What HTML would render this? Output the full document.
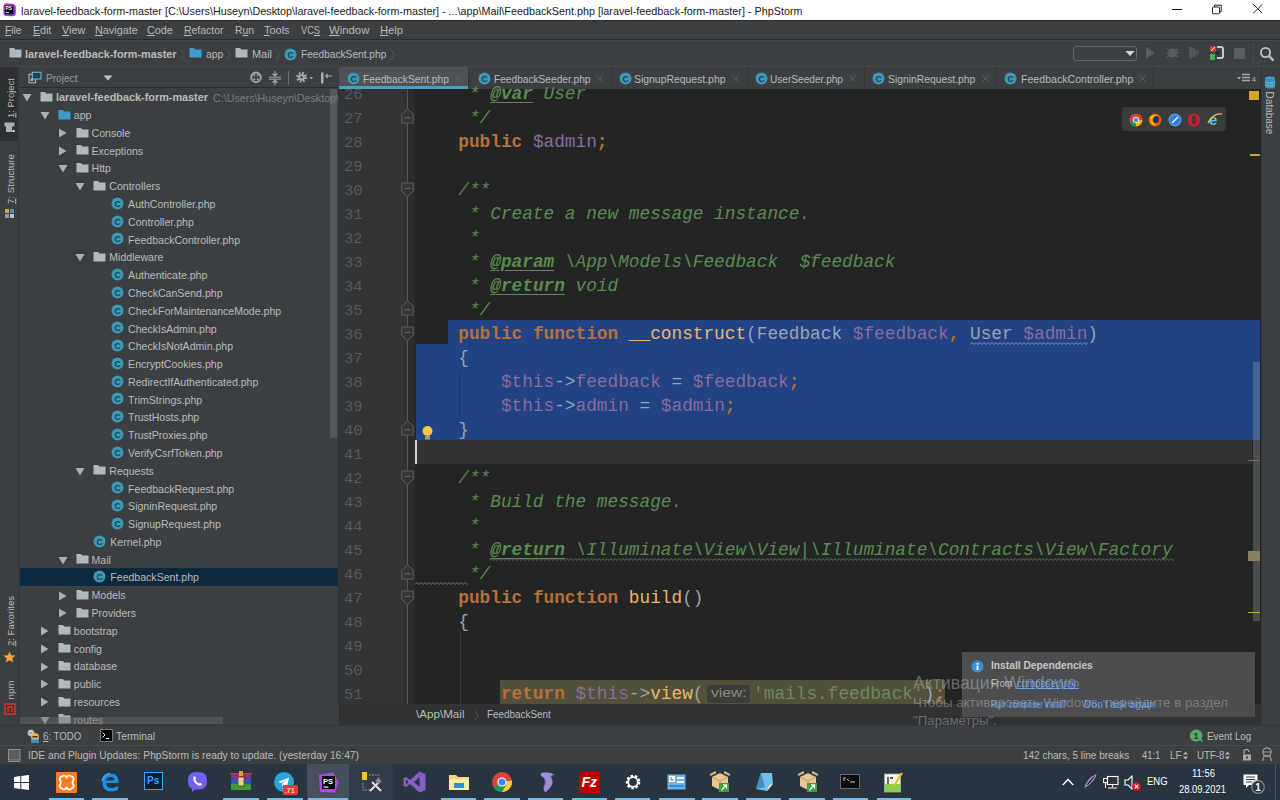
<!DOCTYPE html><html><head><meta charset="utf-8"><style>
html,body{margin:0;padding:0;width:1280px;height:800px;overflow:hidden;background:#3c3f41;}
body{position:relative;font-family:"Liberation Sans",sans-serif;}
div,svg{box-sizing:border-box;}
.u{text-decoration:underline;text-underline-offset:1px;}
</style></head><body>
<div style="position:absolute;left:0px;top:0px;width:1280px;height:20px;background:#ffffff;"></div>
<svg style="position:absolute;left:2px;top:2px;" width="15" height="15" viewBox="0 0 15 15"><defs><linearGradient id="psg" x1="0" y1="0" x2="1" y2="0.6"><stop offset="0" stop-color="#e03aa8"/><stop offset="0.5" stop-color="#a23ee8"/><stop offset="1" stop-color="#7a3cf0"/></linearGradient></defs><path d="M1.5 3.5 Q2 1 5 1.2 L10.5 1.8 Q13.5 2.2 13.8 5.5 L13.8 11 Q13.5 14.3 10 14.2 L4.5 14 Q1.3 13.8 1.3 10.5 Z" fill="url(#psg)"/><rect x="2.8" y="3.6" width="8.6" height="8.6" fill="#000"/><text x="3.4" y="8.2" font-family="Liberation Sans" font-size="5" font-weight="bold" fill="#fff">PS</text><rect x="3.6" y="10.2" width="3.4" height="0.9" fill="#fff"/></svg>
<div style="transform:scaleX(0.9308);position:absolute;left:20.6px;top:3.84px;height:13.92px;line-height:13.92px;font-family:'Liberation Sans',sans-serif;font-size:11.6px;color:#1a1a1a;font-weight:normal;white-space:pre;transform-origin:0 50%;">laravel-feedback-form-master [C:\Users\Huseyn\Desktop\laravel-feedback-form-master] - ...\app\Mail\FeedbackSent.php [laravel-feedback-form-master] - PhpStorm</div>
<div style="position:absolute;left:1172px;top:9px;width:10px;height:1px;background:#111;"></div>
<svg style="position:absolute;left:1211px;top:3.5px;" width="12" height="11" viewBox="0 0 12 11"><rect x="1.5" y="3" width="7" height="6.8" fill="none" stroke="#222" stroke-width="1" rx="0.8"/><path d="M3.5 3 V1.2 H10.2 V7.8 H8.5" fill="none" stroke="#222" stroke-width="1"/></svg>
<svg style="position:absolute;left:1253px;top:4px;" width="10" height="10" viewBox="0 0 10 10"><path d="M0.3 0.3 L9.2 9.2 M9.2 0.3 L0.3 9.2" stroke="#222" stroke-width="1"/></svg>
<div style="position:absolute;left:0px;top:20px;width:1280px;height:20px;background:#3c3f41;"></div>
<div style="position:absolute;left:0px;top:20px;width:1280px;height:1px;background:#2a2c2e;"></div>
<div style="position:absolute;left:0px;top:39px;width:1280px;height:1px;background:#2a2c2e;"></div>
<div style="transform:scaleX(0.9111);position:absolute;left:5.2px;top:23.72px;height:13.56px;line-height:13.56px;font-family:'Liberation Sans',sans-serif;font-size:11.3px;color:#bbbbbb;font-weight:normal;white-space:pre;transform-origin:0 50%;"><span class="u">F</span>ile</div>
<div style="transform:scaleX(0.9392);position:absolute;left:33.1px;top:23.72px;height:13.56px;line-height:13.56px;font-family:'Liberation Sans',sans-serif;font-size:11.3px;color:#bbbbbb;font-weight:normal;white-space:pre;transform-origin:0 50%;"><span class="u">E</span>dit</div>
<div style="transform:scaleX(0.9549);position:absolute;left:61.8px;top:23.72px;height:13.56px;line-height:13.56px;font-family:'Liberation Sans',sans-serif;font-size:11.3px;color:#bbbbbb;font-weight:normal;white-space:pre;transform-origin:0 50%;"><span class="u">V</span>iew</div>
<div style="transform:scaleX(0.9594);position:absolute;left:94.7px;top:23.72px;height:13.56px;line-height:13.56px;font-family:'Liberation Sans',sans-serif;font-size:11.3px;color:#bbbbbb;font-weight:normal;white-space:pre;transform-origin:0 50%;"><span class="u">N</span>avigate</div>
<div style="transform:scaleX(0.9471);position:absolute;left:147.2px;top:23.72px;height:13.56px;line-height:13.56px;font-family:'Liberation Sans',sans-serif;font-size:11.3px;color:#bbbbbb;font-weight:normal;white-space:pre;transform-origin:0 50%;"><span class="u">C</span>ode</div>
<div style="transform:scaleX(0.9223);position:absolute;left:184.1px;top:23.72px;height:13.56px;line-height:13.56px;font-family:'Liberation Sans',sans-serif;font-size:11.3px;color:#bbbbbb;font-weight:normal;white-space:pre;transform-origin:0 50%;"><span class="u">R</span>efactor</div>
<div style="transform:scaleX(0.9150);position:absolute;left:234.8px;top:23.72px;height:13.56px;line-height:13.56px;font-family:'Liberation Sans',sans-serif;font-size:11.3px;color:#bbbbbb;font-weight:normal;white-space:pre;transform-origin:0 50%;">R<span class="u">u</span>n</div>
<div style="transform:scaleX(0.9700);position:absolute;left:263.5px;top:23.72px;height:13.56px;line-height:13.56px;font-family:'Liberation Sans',sans-serif;font-size:11.3px;color:#bbbbbb;font-weight:normal;white-space:pre;transform-origin:0 50%;"><span class="u">T</span>ools</div>
<div style="transform:scaleX(0.8172);position:absolute;left:300.5px;top:23.72px;height:13.56px;line-height:13.56px;font-family:'Liberation Sans',sans-serif;font-size:11.3px;color:#bbbbbb;font-weight:normal;white-space:pre;transform-origin:0 50%;">VC<span class="u">S</span></div>
<div style="transform:scaleX(1.0049);position:absolute;left:329.1px;top:23.72px;height:13.56px;line-height:13.56px;font-family:'Liberation Sans',sans-serif;font-size:11.3px;color:#bbbbbb;font-weight:normal;white-space:pre;transform-origin:0 50%;"><span class="u">W</span>indow</div>
<div style="transform:scaleX(0.9935);position:absolute;left:380.0px;top:23.72px;height:13.56px;line-height:13.56px;font-family:'Liberation Sans',sans-serif;font-size:11.3px;color:#bbbbbb;font-weight:normal;white-space:pre;transform-origin:0 50%;"><span class="u">H</span>elp</div>
<div style="position:absolute;left:0px;top:40px;width:1280px;height:26px;background:#3c3f41;"></div>
<div style="position:absolute;left:0px;top:40px;width:1280px;height:1px;background:#45484a;"></div>
<div style="position:absolute;left:0px;top:66px;width:1280px;height:1px;background:#45484a;"></div>
<svg style="position:absolute;left:8.6px;top:47px;" width="14" height="11" viewBox="0 0 14 11"><path d="M0.5 1 h4.5 l1.2 1.5 h6.3 v8 h-12 z" fill="#aeb9c0"/></svg>
<div style="transform:scaleX(0.9574);position:absolute;left:25px;top:47.82px;height:13.56px;line-height:13.56px;font-family:'Liberation Sans',sans-serif;font-size:11.3px;color:#bbbbbb;font-weight:bold;white-space:pre;transform-origin:0 50%;">laravel-feedback-form-master</div>
<svg style="position:absolute;left:180px;top:49px;" width="7" height="11" viewBox="0 0 7 11"><path d="M1 0.5 L4.5 5.5 L1 10.5" fill="none" stroke="#55585a" stroke-width="1"/></svg>
<svg style="position:absolute;left:189px;top:47px;" width="14" height="11" viewBox="0 0 14 11"><path d="M0.5 1 h4.5 l1.2 1.5 h6.3 v8 h-12 z" fill="#3c9ccc"/></svg>
<div style="transform:scaleX(0.9120);position:absolute;left:205.6px;top:47.82px;height:13.56px;line-height:13.56px;font-family:'Liberation Sans',sans-serif;font-size:11.3px;color:#bbbbbb;font-weight:normal;white-space:pre;transform-origin:0 50%;">app</div>
<svg style="position:absolute;left:225.5px;top:49px;" width="7" height="11" viewBox="0 0 7 11"><path d="M1 0.5 L4.5 5.5 L1 10.5" fill="none" stroke="#55585a" stroke-width="1"/></svg>
<svg style="position:absolute;left:235px;top:47px;" width="14" height="11" viewBox="0 0 14 11"><path d="M0.5 1 h4.5 l1.2 1.5 h6.3 v8 h-12 z" fill="#aeb9c0"/></svg>
<div style="transform:scaleX(0.9653);position:absolute;left:251.5px;top:47.82px;height:13.56px;line-height:13.56px;font-family:'Liberation Sans',sans-serif;font-size:11.3px;color:#bbbbbb;font-weight:normal;white-space:pre;transform-origin:0 50%;">Mail</div>
<svg style="position:absolute;left:274.8px;top:49px;" width="7" height="11" viewBox="0 0 7 11"><path d="M1 0.5 L4.5 5.5 L1 10.5" fill="none" stroke="#55585a" stroke-width="1"/></svg>
<svg style="position:absolute;left:284.3px;top:47.7px;" width="13" height="13" viewBox="0 0 13 13"><circle cx="6.5" cy="6.5" r="6.0" fill="#3e98b6"/><text x="6.5" y="10.0" text-anchor="middle" font-family="Liberation Sans" font-size="8.6" font-weight="bold" fill="#1d3f52">C</text></svg>
<div style="transform:scaleX(0.8994);position:absolute;left:300.7px;top:47.82px;height:13.56px;line-height:13.56px;font-family:'Liberation Sans',sans-serif;font-size:11.3px;color:#bbbbbb;font-weight:normal;white-space:pre;transform-origin:0 50%;">FeedbackSent.php</div>
<svg style="position:absolute;left:389.6px;top:49px;" width="7" height="11" viewBox="0 0 7 11"><path d="M1 0.5 L4.5 5.5 L1 10.5" fill="none" stroke="#55585a" stroke-width="1"/></svg>
<div style="position:absolute;left:1073.4px;top:45.7px;width:64px;height:15.5px;background:transparent;border:1px solid #646669;border-radius:3px;"></div>
<svg style="position:absolute;left:1125px;top:50px;" width="10" height="7" viewBox="0 0 10 7"><path d="M0.5 1 L9.5 1 L5 6 z" fill="#d8d8d8"/></svg>
<svg style="position:absolute;left:1145px;top:46px;" width="11" height="14" viewBox="0 0 11 14"><path d="M1 1 L10 7 L1 13 z" fill="#5b5e60"/></svg>
<svg style="position:absolute;left:1165px;top:45px;" width="15" height="15" viewBox="0 0 15 15"><circle cx="7.5" cy="8" r="4.5" fill="#5b5e60"/><path d="M2 4 L5 6 M13 4 L10 6 M1 8 H4 M11 8 H14 M2 12 L5 10 M13 12 L10 10" stroke="#5b5e60" stroke-width="1.2"/></svg>
<svg style="position:absolute;left:1187px;top:45px;" width="15" height="15" viewBox="0 0 15 15"><path d="M2 1 L13 7.5 L2 14 z" fill="#505355"/><path d="M4 2 v11 M7 3 v9 M10 5 v5" stroke="#6a6d70" stroke-width="1" stroke-dasharray="1,1"/></svg>
<svg style="position:absolute;left:1208px;top:45px;" width="16" height="16" viewBox="0 0 16 16"><circle cx="5" cy="4" r="3.2" fill="#d83b3b"/><path d="M3 6 L7 2" stroke="#fff" stroke-width="0.8"/><rect x="2" y="9" width="5" height="6" fill="#3bb54a"/><path d="M9 2 h4 q2 0 2 2 v7 q0 2 -2 2 h-4" fill="none" stroke="#c8c8c8" stroke-width="2"/><path d="M7 8 L11 6 L11 10 z" fill="#222"/></svg>
<div style="position:absolute;left:1234px;top:48.3px;width:10.7px;height:10.3px;background:#5b5e60;"></div>
<svg style="position:absolute;left:1252px;top:44px;" width="3" height="21" viewBox="0 0 3 21"><path d="M1.5 0 V21" stroke="#5a5d5f" stroke-width="1" stroke-dasharray="1,2"/></svg>
<svg style="position:absolute;left:1259px;top:46px;" width="16" height="16" viewBox="0 0 16 16"><circle cx="6.5" cy="6.5" r="4.6" fill="none" stroke="#c0c2c4" stroke-width="1.8"/><path d="M10 10 L14.5 14.5" stroke="#c0c2c4" stroke-width="2.4"/></svg>
<div style="position:absolute;left:0px;top:67px;width:19px;height:660px;background:#3c3f41;"></div>
<div style="position:absolute;left:18px;top:67px;width:1px;height:660px;background:#323436;"></div>
<div style="position:absolute;left:0px;top:67px;width:18px;height:74px;background:#2d2f30;"></div>
<div style="position:absolute;left:11px;top:98.2px;width:0;height:0;"><div style="position:absolute;left:0;top:0;transform:translate(-50%,-50%) rotate(-90deg);white-space:pre;font-family:'Liberation Sans',sans-serif;font-size:9.45px;line-height:11.339999999999998px;color:#bbbbbb;"><span class="u">1</span>: Project</div></div>
<svg style="position:absolute;left:4px;top:122px;" width="12" height="11" viewBox="0 0 12 11"><rect x="0.5" y="0.5" width="10" height="4" fill="#adb0b3"/><rect x="2" y="4" width="6" height="6" fill="#adb0b3"/><rect x="8.5" y="8" width="2" height="2" fill="#eee"/></svg>
<div style="position:absolute;left:11px;top:179px;width:0;height:0;"><div style="position:absolute;left:0;top:0;transform:translate(-50%,-50%) rotate(-90deg);white-space:pre;font-family:'Liberation Sans',sans-serif;font-size:9.65px;line-height:11.58px;color:#bbbbbb;"><span class="u">7</span>: Structure</div></div>
<svg style="position:absolute;left:4px;top:208px;" width="12" height="12" viewBox="0 0 12 12"><rect x="1" y="1" width="4" height="4" fill="#e0a030"/><rect x="6" y="1" width="4" height="4" fill="#4a8ec8"/><rect x="1" y="6" width="4" height="4" fill="#7aa0c0"/><rect x="6" y="6" width="4" height="4" fill="#c0c0c0"/></svg>
<div style="position:absolute;left:11px;top:621px;width:0;height:0;"><div style="position:absolute;left:0;top:0;transform:translate(-50%,-50%) rotate(-90deg);white-space:pre;font-family:'Liberation Sans',sans-serif;font-size:9.6px;line-height:11.52px;color:#bbbbbb;"><span class="u">2</span>: Favorites</div></div>
<svg style="position:absolute;left:3px;top:651px;" width="13" height="12" viewBox="0 0 13 12"><path d="M6.5 0.5 L8.2 4.3 L12.5 4.6 L9.2 7.4 L10.3 11.5 L6.5 9.3 L2.7 11.5 L3.8 7.4 L0.5 4.6 L4.8 4.3 z" fill="#f0a732"/></svg>
<div style="position:absolute;left:11px;top:690px;width:0;height:0;"><div style="position:absolute;left:0;top:0;transform:translate(-50%,-50%) rotate(-90deg);white-space:pre;font-family:'Liberation Sans',sans-serif;font-size:9.8px;line-height:11.76px;color:#bbbbbb;">npm</div></div>
<svg style="position:absolute;left:4px;top:703px;" width="12" height="12" viewBox="0 0 12 12"><rect x="1" y="1" width="10" height="10" fill="#5a2a28" stroke="#cb3837" stroke-width="1.6"/><path d="M4 9 V4 H8 V9" fill="none" stroke="#cb3837" stroke-width="1.4"/></svg>
<div style="position:absolute;left:19.5px;top:67px;width:319px;height:658px;background:#3c3f41;"></div>
<div style="position:absolute;left:19.5px;top:87px;width:319px;height:1px;background:#2b2b2b;"></div>
<svg style="position:absolute;left:27px;top:71px;" width="16" height="14" viewBox="0 0 16 14"><rect x="2" y="3.3" width="6.5" height="8.5" fill="#3c3f41" stroke="#b0b3b5" stroke-width="1.1"/><rect x="5.3" y="1.3" width="8.7" height="6.7" fill="#1f4050" stroke="#6ab4d4" stroke-width="1.1"/><rect x="3.5" y="7.5" width="2.5" height="2.5" fill="#b0b3b5"/></svg>
<div style="transform:scaleX(1.0120);position:absolute;left:45.5px;top:72.60px;height:12.00px;line-height:12.00px;font-family:'Liberation Sans',sans-serif;font-size:10px;color:#999b9d;font-weight:normal;white-space:pre;transform-origin:0 50%;">Project</div>
<svg style="position:absolute;left:103px;top:75px;" width="10" height="6" viewBox="0 0 10 6"><path d="M0.5 0.5 L9.5 0.5 L5 5.5 z" fill="#c8c8c8"/></svg>
<svg style="position:absolute;left:249.5px;top:71px;" width="13" height="13" viewBox="0 0 13 13"><circle cx="6" cy="6.3" r="4.8" fill="none" stroke="#a8aaad" stroke-width="1.8"/><path d="M3.5 3.5 L5 5 M8.5 3.5 L7 5 M3.5 9 L5 7.5 M8.5 9 L7 7.5" stroke="#a8aaad" stroke-width="1.6"/></svg>
<svg style="position:absolute;left:269px;top:71px;" width="12" height="14" viewBox="0 0 12 14"><path d="M0 6.2 H12 M0 8.2 H12" stroke="#a8aaad" stroke-width="1"/><path d="M6 0 V4.5 M3.5 2.5 L6 5 L8.5 2.5 M6 14 V9.8 M3.5 11.8 L6 9.4 L8.5 11.8" fill="none" stroke="#a8aaad" stroke-width="1.2"/></svg>
<div style="position:absolute;left:288.3px;top:71px;width:1.2px;height:13.5px;background:#6b6e70;"></div>
<svg style="position:absolute;left:295.5px;top:71px;" width="18" height="13" viewBox="0 0 18 13"><circle cx="5.6" cy="6.3" r="4.2" fill="none" stroke="#a8aaad" stroke-width="2.6" stroke-dasharray="1.7,1.6"/><circle cx="5.6" cy="6.3" r="3.4" fill="#a8aaad"/><circle cx="5.6" cy="6.3" r="1.2" fill="#3c3f41"/><path d="M13.5 6 L17 6 L15.25 8.2 z" fill="#a8aaad"/></svg>
<svg style="position:absolute;left:320px;top:72px;" width="13" height="12" viewBox="0 0 13 12"><rect x="1" y="0.5" width="2.5" height="11" fill="#a8aaad"/><path d="M5.5 4 L8 2 M5.5 4 L8 6 M5.5 4 H12" stroke="#a8aaad" stroke-width="1.1" fill="none"/></svg>
<div style="position:absolute;left:329.5px;top:89px;width:7.5px;height:349px;background:#57595b;"></div>
<svg style="position:absolute;left:22.0px;top:93.3px;" width="10" height="9" viewBox="0 0 10 9"><path d="M0.5 1 L9.5 1 L5 8.5 z" fill="#adb0b2"/></svg>
<svg style="position:absolute;left:40.0px;top:91.0px;" width="14" height="11" viewBox="0 0 14 11"><path d="M0.5 1 h4.5 l1.2 1.5 h6.3 v8 h-12 z" fill="#aeb9c0"/></svg>
<div style="transform:scaleX(0.9606);position:absolute;left:56.0px;top:90.72px;height:13.56px;line-height:13.56px;font-family:'Liberation Sans',sans-serif;font-size:11.3px;color:#bbbbbb;font-weight:bold;white-space:pre;transform-origin:0 50%;">laravel-feedback-form-master</div>
<div style="transform:scaleX(0.9722);position:absolute;left:213px;top:91.70px;height:13.20px;line-height:13.20px;font-family:'Liberation Sans',sans-serif;font-size:11px;color:#7a7d80;font-weight:normal;white-space:pre;transform-origin:0 50%;">C:\Users\Huseyn\Desktop\</div>
<svg style="position:absolute;left:39.78px;top:111.08px;" width="10" height="9" viewBox="0 0 10 9"><path d="M0.5 1 L9.5 1 L5 8.5 z" fill="#adb0b2"/></svg>
<svg style="position:absolute;left:57.78px;top:108.78px;" width="14" height="11" viewBox="0 0 14 11"><path d="M0.5 1 h4.5 l1.2 1.5 h6.3 v8 h-12 z" fill="#3c9ccc"/></svg>
<div style="position:absolute;left:73.78px;top:109.15px;height:12.66px;line-height:12.66px;font-family:'Liberation Sans',sans-serif;font-size:10.55px;color:#bbbbbb;font-weight:normal;white-space:pre;">app</div>
<svg style="position:absolute;left:58.06px;top:128.26px;" width="9" height="10" viewBox="0 0 9 10"><path d="M1 0.5 L8.5 5 L1 9.5 z" fill="#adb0b2"/></svg>
<svg style="position:absolute;left:75.56px;top:126.56px;" width="14" height="11" viewBox="0 0 14 11"><path d="M0.5 1 h4.5 l1.2 1.5 h6.3 v8 h-12 z" fill="#aeb9c0"/></svg>
<div style="position:absolute;left:91.56px;top:126.93px;height:12.66px;line-height:12.66px;font-family:'Liberation Sans',sans-serif;font-size:10.55px;color:#bbbbbb;font-weight:normal;white-space:pre;">Console</div>
<svg style="position:absolute;left:58.06px;top:146.04px;" width="9" height="10" viewBox="0 0 9 10"><path d="M1 0.5 L8.5 5 L1 9.5 z" fill="#adb0b2"/></svg>
<svg style="position:absolute;left:75.56px;top:144.34px;" width="14" height="11" viewBox="0 0 14 11"><path d="M0.5 1 h4.5 l1.2 1.5 h6.3 v8 h-12 z" fill="#aeb9c0"/></svg>
<div style="position:absolute;left:91.56px;top:144.71px;height:12.66px;line-height:12.66px;font-family:'Liberation Sans',sans-serif;font-size:10.55px;color:#bbbbbb;font-weight:normal;white-space:pre;">Exceptions</div>
<svg style="position:absolute;left:57.56px;top:164.42000000000002px;" width="10" height="9" viewBox="0 0 10 9"><path d="M0.5 1 L9.5 1 L5 8.5 z" fill="#adb0b2"/></svg>
<svg style="position:absolute;left:75.56px;top:162.12px;" width="14" height="11" viewBox="0 0 14 11"><path d="M0.5 1 h4.5 l1.2 1.5 h6.3 v8 h-12 z" fill="#aeb9c0"/></svg>
<div style="position:absolute;left:91.56px;top:162.49px;height:12.66px;line-height:12.66px;font-family:'Liberation Sans',sans-serif;font-size:10.55px;color:#bbbbbb;font-weight:normal;white-space:pre;">Http</div>
<svg style="position:absolute;left:75.34px;top:182.20000000000002px;" width="10" height="9" viewBox="0 0 10 9"><path d="M0.5 1 L9.5 1 L5 8.5 z" fill="#adb0b2"/></svg>
<svg style="position:absolute;left:93.34px;top:179.9px;" width="14" height="11" viewBox="0 0 14 11"><path d="M0.5 1 h4.5 l1.2 1.5 h6.3 v8 h-12 z" fill="#aeb9c0"/></svg>
<div style="position:absolute;left:109.34px;top:180.27px;height:12.66px;line-height:12.66px;font-family:'Liberation Sans',sans-serif;font-size:10.55px;color:#bbbbbb;font-weight:normal;white-space:pre;">Controllers</div>
<svg style="position:absolute;left:111.12px;top:196.88px;" width="13" height="13" viewBox="0 0 13 13"><circle cx="6.5" cy="6.5" r="6.0" fill="#3e98b6"/><text x="6.5" y="10.0" text-anchor="middle" font-family="Liberation Sans" font-size="8.6" font-weight="bold" fill="#1d3f52">C</text></svg>
<div style="position:absolute;left:128.12px;top:198.05px;height:12.66px;line-height:12.66px;font-family:'Liberation Sans',sans-serif;font-size:10.55px;color:#bbbbbb;font-weight:normal;white-space:pre;">AuthController.php</div>
<svg style="position:absolute;left:111.12px;top:214.66px;" width="13" height="13" viewBox="0 0 13 13"><circle cx="6.5" cy="6.5" r="6.0" fill="#3e98b6"/><text x="6.5" y="10.0" text-anchor="middle" font-family="Liberation Sans" font-size="8.6" font-weight="bold" fill="#1d3f52">C</text></svg>
<div style="position:absolute;left:128.12px;top:215.83px;height:12.66px;line-height:12.66px;font-family:'Liberation Sans',sans-serif;font-size:10.55px;color:#bbbbbb;font-weight:normal;white-space:pre;">Controller.php</div>
<svg style="position:absolute;left:111.12px;top:232.44px;" width="13" height="13" viewBox="0 0 13 13"><circle cx="6.5" cy="6.5" r="6.0" fill="#3e98b6"/><text x="6.5" y="10.0" text-anchor="middle" font-family="Liberation Sans" font-size="8.6" font-weight="bold" fill="#1d3f52">C</text></svg>
<div style="position:absolute;left:128.12px;top:233.61px;height:12.66px;line-height:12.66px;font-family:'Liberation Sans',sans-serif;font-size:10.55px;color:#bbbbbb;font-weight:normal;white-space:pre;">FeedbackController.php</div>
<svg style="position:absolute;left:75.34px;top:253.32px;" width="10" height="9" viewBox="0 0 10 9"><path d="M0.5 1 L9.5 1 L5 8.5 z" fill="#adb0b2"/></svg>
<svg style="position:absolute;left:93.34px;top:251.01999999999998px;" width="14" height="11" viewBox="0 0 14 11"><path d="M0.5 1 h4.5 l1.2 1.5 h6.3 v8 h-12 z" fill="#aeb9c0"/></svg>
<div style="position:absolute;left:109.34px;top:251.39px;height:12.66px;line-height:12.66px;font-family:'Liberation Sans',sans-serif;font-size:10.55px;color:#bbbbbb;font-weight:normal;white-space:pre;">Middleware</div>
<svg style="position:absolute;left:111.12px;top:268.0px;" width="13" height="13" viewBox="0 0 13 13"><circle cx="6.5" cy="6.5" r="6.0" fill="#3e98b6"/><text x="6.5" y="10.0" text-anchor="middle" font-family="Liberation Sans" font-size="8.6" font-weight="bold" fill="#1d3f52">C</text></svg>
<div style="position:absolute;left:128.12px;top:269.17px;height:12.66px;line-height:12.66px;font-family:'Liberation Sans',sans-serif;font-size:10.55px;color:#bbbbbb;font-weight:normal;white-space:pre;">Authenticate.php</div>
<svg style="position:absolute;left:111.12px;top:285.78000000000003px;" width="13" height="13" viewBox="0 0 13 13"><circle cx="6.5" cy="6.5" r="6.0" fill="#3e98b6"/><text x="6.5" y="10.0" text-anchor="middle" font-family="Liberation Sans" font-size="8.6" font-weight="bold" fill="#1d3f52">C</text></svg>
<div style="position:absolute;left:128.12px;top:286.95px;height:12.66px;line-height:12.66px;font-family:'Liberation Sans',sans-serif;font-size:10.55px;color:#bbbbbb;font-weight:normal;white-space:pre;">CheckCanSend.php</div>
<svg style="position:absolute;left:111.12px;top:303.56px;" width="13" height="13" viewBox="0 0 13 13"><circle cx="6.5" cy="6.5" r="6.0" fill="#3e98b6"/><text x="6.5" y="10.0" text-anchor="middle" font-family="Liberation Sans" font-size="8.6" font-weight="bold" fill="#1d3f52">C</text></svg>
<div style="position:absolute;left:128.12px;top:304.73px;height:12.66px;line-height:12.66px;font-family:'Liberation Sans',sans-serif;font-size:10.55px;color:#bbbbbb;font-weight:normal;white-space:pre;">CheckForMaintenanceMode.php</div>
<svg style="position:absolute;left:111.12px;top:321.34px;" width="13" height="13" viewBox="0 0 13 13"><circle cx="6.5" cy="6.5" r="6.0" fill="#3e98b6"/><text x="6.5" y="10.0" text-anchor="middle" font-family="Liberation Sans" font-size="8.6" font-weight="bold" fill="#1d3f52">C</text></svg>
<div style="position:absolute;left:128.12px;top:322.51px;height:12.66px;line-height:12.66px;font-family:'Liberation Sans',sans-serif;font-size:10.55px;color:#bbbbbb;font-weight:normal;white-space:pre;">CheckIsAdmin.php</div>
<svg style="position:absolute;left:111.12px;top:339.12px;" width="13" height="13" viewBox="0 0 13 13"><circle cx="6.5" cy="6.5" r="6.0" fill="#3e98b6"/><text x="6.5" y="10.0" text-anchor="middle" font-family="Liberation Sans" font-size="8.6" font-weight="bold" fill="#1d3f52">C</text></svg>
<div style="position:absolute;left:128.12px;top:340.29px;height:12.66px;line-height:12.66px;font-family:'Liberation Sans',sans-serif;font-size:10.55px;color:#bbbbbb;font-weight:normal;white-space:pre;">CheckIsNotAdmin.php</div>
<svg style="position:absolute;left:111.12px;top:356.90000000000003px;" width="13" height="13" viewBox="0 0 13 13"><circle cx="6.5" cy="6.5" r="6.0" fill="#3e98b6"/><text x="6.5" y="10.0" text-anchor="middle" font-family="Liberation Sans" font-size="8.6" font-weight="bold" fill="#1d3f52">C</text></svg>
<div style="position:absolute;left:128.12px;top:358.07px;height:12.66px;line-height:12.66px;font-family:'Liberation Sans',sans-serif;font-size:10.55px;color:#bbbbbb;font-weight:normal;white-space:pre;">EncryptCookies.php</div>
<svg style="position:absolute;left:111.12px;top:374.68px;" width="13" height="13" viewBox="0 0 13 13"><circle cx="6.5" cy="6.5" r="6.0" fill="#3e98b6"/><text x="6.5" y="10.0" text-anchor="middle" font-family="Liberation Sans" font-size="8.6" font-weight="bold" fill="#1d3f52">C</text></svg>
<div style="position:absolute;left:128.12px;top:375.85px;height:12.66px;line-height:12.66px;font-family:'Liberation Sans',sans-serif;font-size:10.55px;color:#bbbbbb;font-weight:normal;white-space:pre;">RedirectIfAuthenticated.php</div>
<svg style="position:absolute;left:111.12px;top:392.46px;" width="13" height="13" viewBox="0 0 13 13"><circle cx="6.5" cy="6.5" r="6.0" fill="#3e98b6"/><text x="6.5" y="10.0" text-anchor="middle" font-family="Liberation Sans" font-size="8.6" font-weight="bold" fill="#1d3f52">C</text></svg>
<div style="position:absolute;left:128.12px;top:393.63px;height:12.66px;line-height:12.66px;font-family:'Liberation Sans',sans-serif;font-size:10.55px;color:#bbbbbb;font-weight:normal;white-space:pre;">TrimStrings.php</div>
<svg style="position:absolute;left:111.12px;top:410.24px;" width="13" height="13" viewBox="0 0 13 13"><circle cx="6.5" cy="6.5" r="6.0" fill="#3e98b6"/><text x="6.5" y="10.0" text-anchor="middle" font-family="Liberation Sans" font-size="8.6" font-weight="bold" fill="#1d3f52">C</text></svg>
<div style="position:absolute;left:128.12px;top:411.41px;height:12.66px;line-height:12.66px;font-family:'Liberation Sans',sans-serif;font-size:10.55px;color:#bbbbbb;font-weight:normal;white-space:pre;">TrustHosts.php</div>
<svg style="position:absolute;left:111.12px;top:428.02000000000004px;" width="13" height="13" viewBox="0 0 13 13"><circle cx="6.5" cy="6.5" r="6.0" fill="#3e98b6"/><text x="6.5" y="10.0" text-anchor="middle" font-family="Liberation Sans" font-size="8.6" font-weight="bold" fill="#1d3f52">C</text></svg>
<div style="position:absolute;left:128.12px;top:429.19px;height:12.66px;line-height:12.66px;font-family:'Liberation Sans',sans-serif;font-size:10.55px;color:#bbbbbb;font-weight:normal;white-space:pre;">TrustProxies.php</div>
<svg style="position:absolute;left:111.12px;top:445.8px;" width="13" height="13" viewBox="0 0 13 13"><circle cx="6.5" cy="6.5" r="6.0" fill="#3e98b6"/><text x="6.5" y="10.0" text-anchor="middle" font-family="Liberation Sans" font-size="8.6" font-weight="bold" fill="#1d3f52">C</text></svg>
<div style="position:absolute;left:128.12px;top:446.97px;height:12.66px;line-height:12.66px;font-family:'Liberation Sans',sans-serif;font-size:10.55px;color:#bbbbbb;font-weight:normal;white-space:pre;">VerifyCsrfToken.php</div>
<svg style="position:absolute;left:75.34px;top:466.68px;" width="10" height="9" viewBox="0 0 10 9"><path d="M0.5 1 L9.5 1 L5 8.5 z" fill="#adb0b2"/></svg>
<svg style="position:absolute;left:93.34px;top:464.38px;" width="14" height="11" viewBox="0 0 14 11"><path d="M0.5 1 h4.5 l1.2 1.5 h6.3 v8 h-12 z" fill="#aeb9c0"/></svg>
<div style="position:absolute;left:109.34px;top:464.75px;height:12.66px;line-height:12.66px;font-family:'Liberation Sans',sans-serif;font-size:10.55px;color:#bbbbbb;font-weight:normal;white-space:pre;">Requests</div>
<svg style="position:absolute;left:111.12px;top:481.36px;" width="13" height="13" viewBox="0 0 13 13"><circle cx="6.5" cy="6.5" r="6.0" fill="#3e98b6"/><text x="6.5" y="10.0" text-anchor="middle" font-family="Liberation Sans" font-size="8.6" font-weight="bold" fill="#1d3f52">C</text></svg>
<div style="position:absolute;left:128.12px;top:482.53px;height:12.66px;line-height:12.66px;font-family:'Liberation Sans',sans-serif;font-size:10.55px;color:#bbbbbb;font-weight:normal;white-space:pre;">FeedbackRequest.php</div>
<svg style="position:absolute;left:111.12px;top:499.14000000000004px;" width="13" height="13" viewBox="0 0 13 13"><circle cx="6.5" cy="6.5" r="6.0" fill="#3e98b6"/><text x="6.5" y="10.0" text-anchor="middle" font-family="Liberation Sans" font-size="8.6" font-weight="bold" fill="#1d3f52">C</text></svg>
<div style="position:absolute;left:128.12px;top:500.31px;height:12.66px;line-height:12.66px;font-family:'Liberation Sans',sans-serif;font-size:10.55px;color:#bbbbbb;font-weight:normal;white-space:pre;">SigninRequest.php</div>
<svg style="position:absolute;left:111.12px;top:516.9200000000001px;" width="13" height="13" viewBox="0 0 13 13"><circle cx="6.5" cy="6.5" r="6.0" fill="#3e98b6"/><text x="6.5" y="10.0" text-anchor="middle" font-family="Liberation Sans" font-size="8.6" font-weight="bold" fill="#1d3f52">C</text></svg>
<div style="position:absolute;left:128.12px;top:518.09px;height:12.66px;line-height:12.66px;font-family:'Liberation Sans',sans-serif;font-size:10.55px;color:#bbbbbb;font-weight:normal;white-space:pre;">SignupRequest.php</div>
<svg style="position:absolute;left:93.34px;top:534.7px;" width="13" height="13" viewBox="0 0 13 13"><circle cx="6.5" cy="6.5" r="6.0" fill="#3e98b6"/><text x="6.5" y="10.0" text-anchor="middle" font-family="Liberation Sans" font-size="8.6" font-weight="bold" fill="#1d3f52">C</text></svg>
<div style="position:absolute;left:110.34px;top:535.87px;height:12.66px;line-height:12.66px;font-family:'Liberation Sans',sans-serif;font-size:10.55px;color:#bbbbbb;font-weight:normal;white-space:pre;">Kernel.php</div>
<svg style="position:absolute;left:57.56px;top:555.5799999999999px;" width="10" height="9" viewBox="0 0 10 9"><path d="M0.5 1 L9.5 1 L5 8.5 z" fill="#adb0b2"/></svg>
<svg style="position:absolute;left:75.56px;top:553.28px;" width="14" height="11" viewBox="0 0 14 11"><path d="M0.5 1 h4.5 l1.2 1.5 h6.3 v8 h-12 z" fill="#aeb9c0"/></svg>
<div style="position:absolute;left:91.56px;top:553.65px;height:12.66px;line-height:12.66px;font-family:'Liberation Sans',sans-serif;font-size:10.55px;color:#bbbbbb;font-weight:normal;white-space:pre;">Mail</div>
<div style="position:absolute;left:19.5px;top:567.5600000000001px;width:318px;height:18.5px;background:#0d293e;"></div>
<svg style="position:absolute;left:93.34px;top:570.2600000000001px;" width="13" height="13" viewBox="0 0 13 13"><circle cx="6.5" cy="6.5" r="6.0" fill="#3e98b6"/><text x="6.5" y="10.0" text-anchor="middle" font-family="Liberation Sans" font-size="8.6" font-weight="bold" fill="#1d3f52">C</text></svg>
<div style="position:absolute;left:110.34px;top:571.43px;height:12.66px;line-height:12.66px;font-family:'Liberation Sans',sans-serif;font-size:10.55px;color:#bbbbbb;font-weight:normal;white-space:pre;">FeedbackSent.php</div>
<svg style="position:absolute;left:58.06px;top:590.5400000000001px;" width="9" height="10" viewBox="0 0 9 10"><path d="M1 0.5 L8.5 5 L1 9.5 z" fill="#adb0b2"/></svg>
<svg style="position:absolute;left:75.56px;top:588.84px;" width="14" height="11" viewBox="0 0 14 11"><path d="M0.5 1 h4.5 l1.2 1.5 h6.3 v8 h-12 z" fill="#aeb9c0"/></svg>
<div style="position:absolute;left:91.56px;top:589.21px;height:12.66px;line-height:12.66px;font-family:'Liberation Sans',sans-serif;font-size:10.55px;color:#bbbbbb;font-weight:normal;white-space:pre;">Models</div>
<svg style="position:absolute;left:58.06px;top:608.32px;" width="9" height="10" viewBox="0 0 9 10"><path d="M1 0.5 L8.5 5 L1 9.5 z" fill="#adb0b2"/></svg>
<svg style="position:absolute;left:75.56px;top:606.62px;" width="14" height="11" viewBox="0 0 14 11"><path d="M0.5 1 h4.5 l1.2 1.5 h6.3 v8 h-12 z" fill="#aeb9c0"/></svg>
<div style="position:absolute;left:91.56px;top:606.99px;height:12.66px;line-height:12.66px;font-family:'Liberation Sans',sans-serif;font-size:10.55px;color:#bbbbbb;font-weight:normal;white-space:pre;">Providers</div>
<svg style="position:absolute;left:40.28px;top:626.1000000000001px;" width="9" height="10" viewBox="0 0 9 10"><path d="M1 0.5 L8.5 5 L1 9.5 z" fill="#adb0b2"/></svg>
<svg style="position:absolute;left:57.78px;top:624.4000000000001px;" width="14" height="11" viewBox="0 0 14 11"><path d="M0.5 1 h4.5 l1.2 1.5 h6.3 v8 h-12 z" fill="#aeb9c0"/></svg>
<div style="position:absolute;left:73.78px;top:624.77px;height:12.66px;line-height:12.66px;font-family:'Liberation Sans',sans-serif;font-size:10.55px;color:#bbbbbb;font-weight:normal;white-space:pre;">bootstrap</div>
<svg style="position:absolute;left:40.28px;top:643.8800000000001px;" width="9" height="10" viewBox="0 0 9 10"><path d="M1 0.5 L8.5 5 L1 9.5 z" fill="#adb0b2"/></svg>
<svg style="position:absolute;left:57.78px;top:642.1800000000001px;" width="14" height="11" viewBox="0 0 14 11"><path d="M0.5 1 h4.5 l1.2 1.5 h6.3 v8 h-12 z" fill="#aeb9c0"/></svg>
<div style="position:absolute;left:73.78px;top:642.55px;height:12.66px;line-height:12.66px;font-family:'Liberation Sans',sans-serif;font-size:10.55px;color:#bbbbbb;font-weight:normal;white-space:pre;">config</div>
<svg style="position:absolute;left:40.28px;top:661.6600000000001px;" width="9" height="10" viewBox="0 0 9 10"><path d="M1 0.5 L8.5 5 L1 9.5 z" fill="#adb0b2"/></svg>
<svg style="position:absolute;left:57.78px;top:659.96px;" width="14" height="11" viewBox="0 0 14 11"><path d="M0.5 1 h4.5 l1.2 1.5 h6.3 v8 h-12 z" fill="#aeb9c0"/></svg>
<div style="position:absolute;left:73.78px;top:660.33px;height:12.66px;line-height:12.66px;font-family:'Liberation Sans',sans-serif;font-size:10.55px;color:#bbbbbb;font-weight:normal;white-space:pre;">database</div>
<svg style="position:absolute;left:40.28px;top:679.44px;" width="9" height="10" viewBox="0 0 9 10"><path d="M1 0.5 L8.5 5 L1 9.5 z" fill="#adb0b2"/></svg>
<svg style="position:absolute;left:57.78px;top:677.74px;" width="14" height="11" viewBox="0 0 14 11"><path d="M0.5 1 h4.5 l1.2 1.5 h6.3 v8 h-12 z" fill="#aeb9c0"/></svg>
<div style="position:absolute;left:73.78px;top:678.11px;height:12.66px;line-height:12.66px;font-family:'Liberation Sans',sans-serif;font-size:10.55px;color:#bbbbbb;font-weight:normal;white-space:pre;">public</div>
<svg style="position:absolute;left:40.28px;top:697.22px;" width="9" height="10" viewBox="0 0 9 10"><path d="M1 0.5 L8.5 5 L1 9.5 z" fill="#adb0b2"/></svg>
<svg style="position:absolute;left:57.78px;top:695.52px;" width="14" height="11" viewBox="0 0 14 11"><path d="M0.5 1 h4.5 l1.2 1.5 h6.3 v8 h-12 z" fill="#aeb9c0"/></svg>
<div style="position:absolute;left:73.78px;top:695.89px;height:12.66px;line-height:12.66px;font-family:'Liberation Sans',sans-serif;font-size:10.55px;color:#bbbbbb;font-weight:normal;white-space:pre;">resources</div>
<svg style="position:absolute;left:39.78px;top:715.6px;" width="10" height="9" viewBox="0 0 10 9"><path d="M0.5 1 L9.5 1 L5 8.5 z" fill="#adb0b2"/></svg>
<svg style="position:absolute;left:57.78px;top:713.3000000000001px;" width="14" height="11" viewBox="0 0 14 11"><path d="M0.5 1 h4.5 l1.2 1.5 h6.3 v8 h-12 z" fill="#aeb9c0"/></svg>
<div style="position:absolute;left:73.78px;top:713.67px;height:12.66px;line-height:12.66px;font-family:'Liberation Sans',sans-serif;font-size:10.55px;color:#bbbbbb;font-weight:normal;white-space:pre;">routes</div>
<div style="position:absolute;left:20.3px;top:716.5px;width:203px;height:7.5px;background:rgba(105,107,109,0.45);"></div>
<div style="position:absolute;left:338.5px;top:67px;width:922px;height:22px;background:#3c3f41;"></div>
<div style="position:absolute;left:338.9px;top:67px;width:129.3px;height:19px;background:#4e5254;"></div>
<div style="position:absolute;left:338.9px;top:86px;width:129.3px;height:3px;background:#4a9fc0;"></div>
<div style="position:absolute;left:338.5px;top:88.6px;width:922px;height:0.6px;background:#2b2b2b;"></div>
<svg style="position:absolute;left:346.9px;top:72.3px;" width="13" height="13" viewBox="0 0 13 13"><circle cx="6.5" cy="6.5" r="6.0" fill="#3e98b6"/><text x="6.5" y="10.0" text-anchor="middle" font-family="Liberation Sans" font-size="8.6" font-weight="bold" fill="#1d3f52">C</text></svg>
<div style="transform:scaleX(0.9057);position:absolute;left:362.7px;top:73.02px;height:13.56px;line-height:13.56px;font-family:'Liberation Sans',sans-serif;font-size:11.3px;color:#bbbbbb;font-weight:normal;white-space:pre;transform-origin:0 50%;">FeedbackSent.php</div>
<svg style="position:absolute;left:454.8px;top:75px;" width="7" height="7" viewBox="0 0 7 7"><path d="M0.5 0.5 L6.5 6.5 M6.5 0.5 L0.5 6.5" stroke="#5e6163" stroke-width="1"/></svg>
<div style="position:absolute;left:468.2px;top:67px;width:1px;height:22px;background:#323436;"></div>
<svg style="position:absolute;left:477.7px;top:72.3px;" width="13" height="13" viewBox="0 0 13 13"><circle cx="6.5" cy="6.5" r="6.0" fill="#3e98b6"/><text x="6.5" y="10.0" text-anchor="middle" font-family="Liberation Sans" font-size="8.6" font-weight="bold" fill="#1d3f52">C</text></svg>
<div style="transform:scaleX(0.8985);position:absolute;left:493.5px;top:73.02px;height:13.56px;line-height:13.56px;font-family:'Liberation Sans',sans-serif;font-size:11.3px;color:#bbbbbb;font-weight:normal;white-space:pre;transform-origin:0 50%;">FeedbackSeeder.php</div>
<svg style="position:absolute;left:595.9px;top:75px;" width="7" height="7" viewBox="0 0 7 7"><path d="M0.5 0.5 L6.5 6.5 M6.5 0.5 L0.5 6.5" stroke="#5e6163" stroke-width="1"/></svg>
<div style="position:absolute;left:610.6px;top:67px;width:1px;height:22px;background:#323436;"></div>
<svg style="position:absolute;left:619.2px;top:72.3px;" width="13" height="13" viewBox="0 0 13 13"><circle cx="6.5" cy="6.5" r="6.0" fill="#3e98b6"/><text x="6.5" y="10.0" text-anchor="middle" font-family="Liberation Sans" font-size="8.6" font-weight="bold" fill="#1d3f52">C</text></svg>
<div style="transform:scaleX(0.9219);position:absolute;left:634.2px;top:73.02px;height:13.56px;line-height:13.56px;font-family:'Liberation Sans',sans-serif;font-size:11.3px;color:#bbbbbb;font-weight:normal;white-space:pre;transform-origin:0 50%;">SignupRequest.php</div>
<svg style="position:absolute;left:732.0px;top:75px;" width="7" height="7" viewBox="0 0 7 7"><path d="M0.5 0.5 L6.5 6.5 M6.5 0.5 L0.5 6.5" stroke="#5e6163" stroke-width="1"/></svg>
<div style="position:absolute;left:746.7px;top:67px;width:1px;height:22px;background:#323436;"></div>
<svg style="position:absolute;left:755px;top:72.3px;" width="13" height="13" viewBox="0 0 13 13"><circle cx="6.5" cy="6.5" r="6.0" fill="#3e98b6"/><text x="6.5" y="10.0" text-anchor="middle" font-family="Liberation Sans" font-size="8.6" font-weight="bold" fill="#1d3f52">C</text></svg>
<div style="transform:scaleX(0.8940);position:absolute;left:770px;top:73.02px;height:13.56px;line-height:13.56px;font-family:'Liberation Sans',sans-serif;font-size:11.3px;color:#bbbbbb;font-weight:normal;white-space:pre;transform-origin:0 50%;">UserSeeder.php</div>
<svg style="position:absolute;left:849.0px;top:75px;" width="7" height="7" viewBox="0 0 7 7"><path d="M0.5 0.5 L6.5 6.5 M6.5 0.5 L0.5 6.5" stroke="#5e6163" stroke-width="1"/></svg>
<div style="position:absolute;left:863.7px;top:67px;width:1px;height:22px;background:#323436;"></div>
<svg style="position:absolute;left:872px;top:72.3px;" width="13" height="13" viewBox="0 0 13 13"><circle cx="6.5" cy="6.5" r="6.0" fill="#3e98b6"/><text x="6.5" y="10.0" text-anchor="middle" font-family="Liberation Sans" font-size="8.6" font-weight="bold" fill="#1d3f52">C</text></svg>
<div style="transform:scaleX(0.9144);position:absolute;left:888px;top:73.02px;height:13.56px;line-height:13.56px;font-family:'Liberation Sans',sans-serif;font-size:11.3px;color:#bbbbbb;font-weight:normal;white-space:pre;transform-origin:0 50%;">SigninRequest.php</div>
<svg style="position:absolute;left:982.1px;top:75px;" width="7" height="7" viewBox="0 0 7 7"><path d="M0.5 0.5 L6.5 6.5 M6.5 0.5 L0.5 6.5" stroke="#5e6163" stroke-width="1"/></svg>
<div style="position:absolute;left:996px;top:67px;width:1px;height:22px;background:#323436;"></div>
<svg style="position:absolute;left:1004.4px;top:72.3px;" width="13" height="13" viewBox="0 0 13 13"><circle cx="6.5" cy="6.5" r="6.0" fill="#3e98b6"/><text x="6.5" y="10.0" text-anchor="middle" font-family="Liberation Sans" font-size="8.6" font-weight="bold" fill="#1d3f52">C</text></svg>
<div style="transform:scaleX(0.9370);position:absolute;left:1020.6px;top:73.02px;height:13.56px;line-height:13.56px;font-family:'Liberation Sans',sans-serif;font-size:11.3px;color:#bbbbbb;font-weight:normal;white-space:pre;transform-origin:0 50%;">FeedbackController.php</div>
<svg style="position:absolute;left:1139.0px;top:75px;" width="7" height="7" viewBox="0 0 7 7"><path d="M0.5 0.5 L6.5 6.5 M6.5 0.5 L0.5 6.5" stroke="#5e6163" stroke-width="1"/></svg>
<div style="position:absolute;left:1153.4px;top:67px;width:1px;height:22px;background:#323436;"></div>
<svg style="position:absolute;left:1236px;top:72px;" width="22" height="12" viewBox="0 0 22 12"><path d="M1 5 L5 5 L3 7.5 z" fill="#a8aaad"/><path d="M6 2.5 H14 M6 5.5 H14 M6 8.5 H14" stroke="#a8aaad" stroke-width="1.3"/><text x="15.5" y="10" font-family="Liberation Sans" font-size="8" fill="#a8aaad">4</text></svg>
<div style="position:absolute;left:338px;top:89px;width:922.5px;height:615px;background:#232524;"></div>
<div style="position:absolute;left:338px;top:89px;width:64px;height:615px;background:#313335;"></div>
<div style="position:absolute;left:402px;top:89px;width:5px;height:615px;background:#2f3133;"></div>
<div style="position:absolute;left:408px;top:89px;width:6.600000000000023px;height:615px;background:#2b2b2b;"></div>
<div style="position:absolute;left:415.6px;top:440.0px;width:836.6999999999999px;height:24px;background:#323232;"></div>
<div style="position:absolute;left:447.6001px;top:320.0px;width:812.8999px;height:24px;background:#214283;"></div>
<div style="position:absolute;left:415.6px;top:344.0px;width:844.9px;height:96px;background:#214283;"></div>
<div style="position:absolute;left:499.9336px;top:680.0px;width:445.0664px;height:24px;background:#52503a;"></div>
<div style="position:absolute;left:458.8px;top:370.0px;width:1.2px;height:46px;background:#1a3470;"></div>
<div style="position:absolute;left:459.5px;top:631.5px;width:1px;height:72.5px;background:#3b3b3b;"></div>
<div style="position:absolute;left:407px;top:89px;width:1px;height:615px;background:#555759;"></div>
<svg style="position:absolute;left:400.5px;top:107.0px;" width="14" height="18" viewBox="0 0 14 18"><path d="M0.8 16 V7.5 L6.5 1.5 L12.2 7.5 V16 Z" fill="#313335" stroke="#5e6163" stroke-width="1"/><path d="M3.5 10.8 H9.5" stroke="#6e7173" stroke-width="1"/></svg>
<svg style="position:absolute;left:400.5px;top:299.0px;" width="14" height="18" viewBox="0 0 14 18"><path d="M0.8 16 V7.5 L6.5 1.5 L12.2 7.5 V16 Z" fill="#313335" stroke="#5e6163" stroke-width="1"/><path d="M3.5 10.8 H9.5" stroke="#6e7173" stroke-width="1"/></svg>
<svg style="position:absolute;left:400.5px;top:419.0px;" width="14" height="18" viewBox="0 0 14 18"><path d="M0.8 16 V7.5 L6.5 1.5 L12.2 7.5 V16 Z" fill="#313335" stroke="#5e6163" stroke-width="1"/><path d="M3.5 10.8 H9.5" stroke="#6e7173" stroke-width="1"/></svg>
<svg style="position:absolute;left:400.5px;top:563.0px;" width="14" height="18" viewBox="0 0 14 18"><path d="M0.8 16 V7.5 L6.5 1.5 L12.2 7.5 V16 Z" fill="#313335" stroke="#5e6163" stroke-width="1"/><path d="M3.5 10.8 H9.5" stroke="#6e7173" stroke-width="1"/></svg>
<svg style="position:absolute;left:400.5px;top:182.0px;" width="14" height="18" viewBox="0 0 14 18"><path d="M0.8 1 V9 L6.5 15 L12.2 9 V1 Z" fill="#313335" stroke="#5e6163" stroke-width="1"/><path d="M3.5 6.3 H9.5" stroke="#6e7173" stroke-width="1"/></svg>
<svg style="position:absolute;left:400.5px;top:326.0px;" width="14" height="18" viewBox="0 0 14 18"><path d="M0.8 1 V9 L6.5 15 L12.2 9 V1 Z" fill="#313335" stroke="#5e6163" stroke-width="1"/><path d="M3.5 6.3 H9.5" stroke="#6e7173" stroke-width="1"/></svg>
<svg style="position:absolute;left:400.5px;top:470.0px;" width="14" height="18" viewBox="0 0 14 18"><path d="M0.8 1 V9 L6.5 15 L12.2 9 V1 Z" fill="#313335" stroke="#5e6163" stroke-width="1"/><path d="M3.5 6.3 H9.5" stroke="#6e7173" stroke-width="1"/></svg>
<svg style="position:absolute;left:400.5px;top:590.0px;" width="14" height="18" viewBox="0 0 14 18"><path d="M0.8 1 V9 L6.5 15 L12.2 9 V1 Z" fill="#313335" stroke="#5e6163" stroke-width="1"/><path d="M3.5 6.3 H9.5" stroke="#6e7173" stroke-width="1"/></svg>
<div style="position:absolute;left:344px;top:85.90px;height:18.60px;line-height:18.60px;font-family:'Liberation Mono',sans-serif;font-size:15.5px;color:#595c5f;font-weight:normal;white-space:pre;">26</div>
<div style="position:absolute;left:344px;top:109.90px;height:18.60px;line-height:18.60px;font-family:'Liberation Mono',sans-serif;font-size:15.5px;color:#595c5f;font-weight:normal;white-space:pre;">27</div>
<div style="position:absolute;left:344px;top:133.90px;height:18.60px;line-height:18.60px;font-family:'Liberation Mono',sans-serif;font-size:15.5px;color:#595c5f;font-weight:normal;white-space:pre;">28</div>
<div style="position:absolute;left:344px;top:157.90px;height:18.60px;line-height:18.60px;font-family:'Liberation Mono',sans-serif;font-size:15.5px;color:#595c5f;font-weight:normal;white-space:pre;">29</div>
<div style="position:absolute;left:344px;top:181.90px;height:18.60px;line-height:18.60px;font-family:'Liberation Mono',sans-serif;font-size:15.5px;color:#595c5f;font-weight:normal;white-space:pre;">30</div>
<div style="position:absolute;left:344px;top:205.90px;height:18.60px;line-height:18.60px;font-family:'Liberation Mono',sans-serif;font-size:15.5px;color:#595c5f;font-weight:normal;white-space:pre;">31</div>
<div style="position:absolute;left:344px;top:229.90px;height:18.60px;line-height:18.60px;font-family:'Liberation Mono',sans-serif;font-size:15.5px;color:#595c5f;font-weight:normal;white-space:pre;">32</div>
<div style="position:absolute;left:344px;top:253.90px;height:18.60px;line-height:18.60px;font-family:'Liberation Mono',sans-serif;font-size:15.5px;color:#595c5f;font-weight:normal;white-space:pre;">33</div>
<div style="position:absolute;left:344px;top:277.90px;height:18.60px;line-height:18.60px;font-family:'Liberation Mono',sans-serif;font-size:15.5px;color:#595c5f;font-weight:normal;white-space:pre;">34</div>
<div style="position:absolute;left:344px;top:301.90px;height:18.60px;line-height:18.60px;font-family:'Liberation Mono',sans-serif;font-size:15.5px;color:#595c5f;font-weight:normal;white-space:pre;">35</div>
<div style="position:absolute;left:344px;top:325.90px;height:18.60px;line-height:18.60px;font-family:'Liberation Mono',sans-serif;font-size:15.5px;color:#595c5f;font-weight:normal;white-space:pre;">36</div>
<div style="position:absolute;left:344px;top:349.90px;height:18.60px;line-height:18.60px;font-family:'Liberation Mono',sans-serif;font-size:15.5px;color:#595c5f;font-weight:normal;white-space:pre;">37</div>
<div style="position:absolute;left:344px;top:373.90px;height:18.60px;line-height:18.60px;font-family:'Liberation Mono',sans-serif;font-size:15.5px;color:#595c5f;font-weight:normal;white-space:pre;">38</div>
<div style="position:absolute;left:344px;top:397.90px;height:18.60px;line-height:18.60px;font-family:'Liberation Mono',sans-serif;font-size:15.5px;color:#595c5f;font-weight:normal;white-space:pre;">39</div>
<div style="position:absolute;left:344px;top:421.90px;height:18.60px;line-height:18.60px;font-family:'Liberation Mono',sans-serif;font-size:15.5px;color:#595c5f;font-weight:normal;white-space:pre;">40</div>
<div style="position:absolute;left:344px;top:445.90px;height:18.60px;line-height:18.60px;font-family:'Liberation Mono',sans-serif;font-size:15.5px;color:#595c5f;font-weight:normal;white-space:pre;">41</div>
<div style="position:absolute;left:344px;top:469.90px;height:18.60px;line-height:18.60px;font-family:'Liberation Mono',sans-serif;font-size:15.5px;color:#595c5f;font-weight:normal;white-space:pre;">42</div>
<div style="position:absolute;left:344px;top:493.90px;height:18.60px;line-height:18.60px;font-family:'Liberation Mono',sans-serif;font-size:15.5px;color:#595c5f;font-weight:normal;white-space:pre;">43</div>
<div style="position:absolute;left:344px;top:517.90px;height:18.60px;line-height:18.60px;font-family:'Liberation Mono',sans-serif;font-size:15.5px;color:#595c5f;font-weight:normal;white-space:pre;">44</div>
<div style="position:absolute;left:344px;top:541.90px;height:18.60px;line-height:18.60px;font-family:'Liberation Mono',sans-serif;font-size:15.5px;color:#595c5f;font-weight:normal;white-space:pre;">45</div>
<div style="position:absolute;left:344px;top:565.90px;height:18.60px;line-height:18.60px;font-family:'Liberation Mono',sans-serif;font-size:15.5px;color:#595c5f;font-weight:normal;white-space:pre;">46</div>
<div style="position:absolute;left:344px;top:589.90px;height:18.60px;line-height:18.60px;font-family:'Liberation Mono',sans-serif;font-size:15.5px;color:#595c5f;font-weight:normal;white-space:pre;">47</div>
<div style="position:absolute;left:344px;top:613.90px;height:18.60px;line-height:18.60px;font-family:'Liberation Mono',sans-serif;font-size:15.5px;color:#595c5f;font-weight:normal;white-space:pre;">48</div>
<div style="position:absolute;left:344px;top:637.90px;height:18.60px;line-height:18.60px;font-family:'Liberation Mono',sans-serif;font-size:15.5px;color:#595c5f;font-weight:normal;white-space:pre;">49</div>
<div style="position:absolute;left:344px;top:661.90px;height:18.60px;line-height:18.60px;font-family:'Liberation Mono',sans-serif;font-size:15.5px;color:#595c5f;font-weight:normal;white-space:pre;">50</div>
<div style="position:absolute;left:344px;top:685.90px;height:18.60px;line-height:18.60px;font-family:'Liberation Mono',sans-serif;font-size:15.5px;color:#595c5f;font-weight:normal;white-space:pre;">51</div>
<div style="position:absolute;left:415.6px;top:81.50px;height:24.00px;line-height:24.00px;font-family:'Liberation Mono',sans-serif;font-size:17.78px;color:#a9b7c6;font-weight:normal;white-space:pre;">     <span style="color:#5a8a50;font-style:italic">* </span><span style="color:#5a8a50;font-weight:bold;font-style:italic;text-decoration:underline;text-underline-offset:3px">@var</span><span style="color:#5a8a50;font-style:italic"> User</span></div>
<div style="position:absolute;left:415.6px;top:105.50px;height:24.00px;line-height:24.00px;font-family:'Liberation Mono',sans-serif;font-size:17.78px;color:#a9b7c6;font-weight:normal;white-space:pre;">     <span style="color:#5a8a50;font-style:italic">*/</span></div>
<div style="position:absolute;left:415.6px;top:129.50px;height:24.00px;line-height:24.00px;font-family:'Liberation Mono',sans-serif;font-size:17.78px;color:#a9b7c6;font-weight:normal;white-space:pre;">    <span style="color:#b8703a;font-weight:bold">public </span><span style="color:#8a6e9c">$admin</span><span style="color:#b8703a;font-weight:bold">;</span></div>
<div style="position:absolute;left:415.6px;top:177.50px;height:24.00px;line-height:24.00px;font-family:'Liberation Mono',sans-serif;font-size:17.78px;color:#a9b7c6;font-weight:normal;white-space:pre;">    <span style="color:#5a8a50;font-style:italic">/**</span></div>
<div style="position:absolute;left:415.6px;top:201.50px;height:24.00px;line-height:24.00px;font-family:'Liberation Mono',sans-serif;font-size:17.78px;color:#a9b7c6;font-weight:normal;white-space:pre;">     <span style="color:#5a8a50;font-style:italic">* Create a new message instance.</span></div>
<div style="position:absolute;left:415.6px;top:225.50px;height:24.00px;line-height:24.00px;font-family:'Liberation Mono',sans-serif;font-size:17.78px;color:#a9b7c6;font-weight:normal;white-space:pre;">     <span style="color:#5a8a50;font-style:italic">*</span></div>
<div style="position:absolute;left:415.6px;top:249.50px;height:24.00px;line-height:24.00px;font-family:'Liberation Mono',sans-serif;font-size:17.78px;color:#a9b7c6;font-weight:normal;white-space:pre;">     <span style="color:#5a8a50;font-style:italic">* </span><span style="color:#5a8a50;font-weight:bold;font-style:italic;text-decoration:underline;text-underline-offset:3px">@param</span><span style="color:#5a8a50;font-style:italic"> \App\Models\Feedback  $feedback</span></div>
<div style="position:absolute;left:415.6px;top:273.50px;height:24.00px;line-height:24.00px;font-family:'Liberation Mono',sans-serif;font-size:17.78px;color:#a9b7c6;font-weight:normal;white-space:pre;">     <span style="color:#5a8a50;font-style:italic">* </span><span style="color:#5a8a50;font-weight:bold;font-style:italic;text-decoration:underline;text-underline-offset:3px">@return</span><span style="color:#5a8a50;font-style:italic"> void</span></div>
<div style="position:absolute;left:415.6px;top:297.50px;height:24.00px;line-height:24.00px;font-family:'Liberation Mono',sans-serif;font-size:17.78px;color:#a9b7c6;font-weight:normal;white-space:pre;">     <span style="color:#5a8a50;font-style:italic">*/</span></div>
<div style="position:absolute;left:415.6px;top:321.50px;height:24.00px;line-height:24.00px;font-family:'Liberation Mono',sans-serif;font-size:17.78px;color:#a9b7c6;font-weight:normal;white-space:pre;">    <span style="color:#b8703a;font-weight:bold">public function </span><span style="color:#e8b868">__construct</span><span style="color:#9aa6b2">(Feedback </span><span style="color:#8a6e9c">$feedback</span><span style="color:#b8703a;font-weight:bold">, </span><span style="color:#9aa6b2">User </span><span style="color:#8a6e9c">$admin</span><span style="color:#9aa6b2">)</span></div>
<div style="position:absolute;left:415.6px;top:345.50px;height:24.00px;line-height:24.00px;font-family:'Liberation Mono',sans-serif;font-size:17.78px;color:#a9b7c6;font-weight:normal;white-space:pre;">    <span style="color:#9aa6b2">{</span></div>
<div style="position:absolute;left:415.6px;top:369.50px;height:24.00px;line-height:24.00px;font-family:'Liberation Mono',sans-serif;font-size:17.78px;color:#a9b7c6;font-weight:normal;white-space:pre;">        <span style="color:#8a6e9c">$this</span><span style="color:#9aa6b2">-&gt;</span><span style="color:#8a6e9c">feedback</span><span style="color:#9aa6b2"> = </span><span style="color:#8a6e9c">$feedback</span><span style="color:#b8703a;font-weight:bold">;</span></div>
<div style="position:absolute;left:415.6px;top:393.50px;height:24.00px;line-height:24.00px;font-family:'Liberation Mono',sans-serif;font-size:17.78px;color:#a9b7c6;font-weight:normal;white-space:pre;">        <span style="color:#8a6e9c">$this</span><span style="color:#9aa6b2">-&gt;</span><span style="color:#8a6e9c">admin</span><span style="color:#9aa6b2"> = </span><span style="color:#8a6e9c">$admin</span><span style="color:#b8703a;font-weight:bold">;</span></div>
<div style="position:absolute;left:415.6px;top:417.50px;height:24.00px;line-height:24.00px;font-family:'Liberation Mono',sans-serif;font-size:17.78px;color:#a9b7c6;font-weight:normal;white-space:pre;">    <span style="color:#9aa6b2">}</span></div>
<div style="position:absolute;left:415.6px;top:465.50px;height:24.00px;line-height:24.00px;font-family:'Liberation Mono',sans-serif;font-size:17.78px;color:#a9b7c6;font-weight:normal;white-space:pre;">    <span style="color:#5a8a50;font-style:italic">/**</span></div>
<div style="position:absolute;left:415.6px;top:489.50px;height:24.00px;line-height:24.00px;font-family:'Liberation Mono',sans-serif;font-size:17.78px;color:#a9b7c6;font-weight:normal;white-space:pre;">     <span style="color:#5a8a50;font-style:italic">* Build the message.</span></div>
<div style="position:absolute;left:415.6px;top:513.50px;height:24.00px;line-height:24.00px;font-family:'Liberation Mono',sans-serif;font-size:17.78px;color:#a9b7c6;font-weight:normal;white-space:pre;">     <span style="color:#5a8a50;font-style:italic">*</span></div>
<div style="position:absolute;left:415.6px;top:537.50px;height:24.00px;line-height:24.00px;font-family:'Liberation Mono',sans-serif;font-size:17.78px;color:#a9b7c6;font-weight:normal;white-space:pre;">     <span style="color:#5a8a50;font-style:italic">* </span><span style="color:#5a8a50;font-weight:bold;font-style:italic;text-decoration:underline;text-underline-offset:3px">@return</span><span style="color:#5a8a50;font-style:italic"> \Illuminate\View\View|\Illuminate\Contracts\View\Factory</span></div>
<div style="position:absolute;left:415.6px;top:561.50px;height:24.00px;line-height:24.00px;font-family:'Liberation Mono',sans-serif;font-size:17.78px;color:#a9b7c6;font-weight:normal;white-space:pre;">     <span style="color:#5a8a50;font-style:italic">*/</span></div>
<div style="position:absolute;left:415.6px;top:585.50px;height:24.00px;line-height:24.00px;font-family:'Liberation Mono',sans-serif;font-size:17.78px;color:#a9b7c6;font-weight:normal;white-space:pre;">    <span style="color:#b8703a;font-weight:bold">public function </span><span style="color:#e8b868">build</span><span style="color:#9aa6b2">()</span></div>
<div style="position:absolute;left:415.6px;top:609.50px;height:24.00px;line-height:24.00px;font-family:'Liberation Mono',sans-serif;font-size:17.78px;color:#a9b7c6;font-weight:normal;white-space:pre;">    <span style="color:#9aa6b2">{</span></div>
<div style="position:absolute;left:415.6px;top:681.50px;height:24.00px;line-height:24.00px;font-family:'Liberation Mono',sans-serif;font-size:17.78px;color:#a9b7c6;font-weight:normal;white-space:pre;">        <span style="color:#b8703a;font-weight:bold">return </span><span style="color:#8a6e9c">$this</span><span style="color:#9aa6b2">-&gt;</span><span style="color:#e8b868">view</span><span style="color:#9aa6b2">(</span></div>
<div style="position:absolute;left:706.5px;top:684.5px;width:43.5px;height:18px;background:#3b3b39;border-radius:3px;"></div>
<div style="transform:scaleX(1.1539);position:absolute;left:710.5px;top:685.40px;height:16.20px;line-height:16.20px;font-family:'Liberation Sans',sans-serif;font-size:13.5px;color:#8c8c8c;font-weight:normal;white-space:pre;transform-origin:0 50%;">view:</div>
<div style="position:absolute;left:753.1px;top:681.50px;height:24.00px;line-height:24.00px;font-family:'Liberation Mono',sans-serif;font-size:17.78px;color:#bbbbbb;font-weight:normal;white-space:pre;"><span style="color:#6f8a5e">'mails.feedback'</span><span style="color:#9aa6b2">)</span><span style="color:#b8703a;font-weight:bold">;</span></div>
<svg style="position:absolute;left:970px;top:341.5px;" width="118" height="3" viewBox="0 0 118 3"><path d="M0 2.5 L2 0.5 L4 2.5 L6 0.5 L8 2.5 L10 0.5 L12 2.5 L14 0.5 L16 2.5 L18 0.5 L20 2.5 L22 0.5 L24 2.5 L26 0.5 L28 2.5 L30 0.5 L32 2.5 L34 0.5 L36 2.5 L38 0.5 L40 2.5 L42 0.5 L44 2.5 L46 0.5 L48 2.5 L50 0.5 L52 2.5 L54 0.5 L56 2.5 L58 0.5 L60 2.5 L62 0.5 L64 2.5 L66 0.5 L68 2.5 L70 0.5 L72 2.5 L74 0.5 L76 2.5 L78 0.5 L80 2.5 L82 0.5 L84 2.5 L86 0.5 L88 2.5 L90 0.5 L92 2.5 L94 0.5 L96 2.5 L98 0.5 L100 2.5 L102 0.5 L104 2.5 L106 0.5 L108 2.5 L110 0.5 L112 2.5 L114 0.5 L116 2.5 L118 0.5 L120 2.5" fill="none" stroke="#9aa0a8" stroke-width="1" opacity="0.85"/></svg>
<svg style="position:absolute;left:489px;top:557.5px;" width="685" height="3" viewBox="0 0 685 3"><path d="M0 2.5 L2 0.5 L4 2.5 L6 0.5 L8 2.5 L10 0.5 L12 2.5 L14 0.5 L16 2.5 L18 0.5 L20 2.5 L22 0.5 L24 2.5 L26 0.5 L28 2.5 L30 0.5 L32 2.5 L34 0.5 L36 2.5 L38 0.5 L40 2.5 L42 0.5 L44 2.5 L46 0.5 L48 2.5 L50 0.5 L52 2.5 L54 0.5 L56 2.5 L58 0.5 L60 2.5 L62 0.5 L64 2.5 L66 0.5 L68 2.5 L70 0.5 L72 2.5 L74 0.5 L76 2.5 L78 0.5 L80 2.5 L82 0.5 L84 2.5 L86 0.5 L88 2.5 L90 0.5 L92 2.5 L94 0.5 L96 2.5 L98 0.5 L100 2.5 L102 0.5 L104 2.5 L106 0.5 L108 2.5 L110 0.5 L112 2.5 L114 0.5 L116 2.5 L118 0.5 L120 2.5 L122 0.5 L124 2.5 L126 0.5 L128 2.5 L130 0.5 L132 2.5 L134 0.5 L136 2.5 L138 0.5 L140 2.5 L142 0.5 L144 2.5 L146 0.5 L148 2.5 L150 0.5 L152 2.5 L154 0.5 L156 2.5 L158 0.5 L160 2.5 L162 0.5 L164 2.5 L166 0.5 L168 2.5 L170 0.5 L172 2.5 L174 0.5 L176 2.5 L178 0.5 L180 2.5 L182 0.5 L184 2.5 L186 0.5 L188 2.5 L190 0.5 L192 2.5 L194 0.5 L196 2.5 L198 0.5 L200 2.5 L202 0.5 L204 2.5 L206 0.5 L208 2.5 L210 0.5 L212 2.5 L214 0.5 L216 2.5 L218 0.5 L220 2.5 L222 0.5 L224 2.5 L226 0.5 L228 2.5 L230 0.5 L232 2.5 L234 0.5 L236 2.5 L238 0.5 L240 2.5 L242 0.5 L244 2.5 L246 0.5 L248 2.5 L250 0.5 L252 2.5 L254 0.5 L256 2.5 L258 0.5 L260 2.5 L262 0.5 L264 2.5 L266 0.5 L268 2.5 L270 0.5 L272 2.5 L274 0.5 L276 2.5 L278 0.5 L280 2.5 L282 0.5 L284 2.5 L286 0.5 L288 2.5 L290 0.5 L292 2.5 L294 0.5 L296 2.5 L298 0.5 L300 2.5 L302 0.5 L304 2.5 L306 0.5 L308 2.5 L310 0.5 L312 2.5 L314 0.5 L316 2.5 L318 0.5 L320 2.5 L322 0.5 L324 2.5 L326 0.5 L328 2.5 L330 0.5 L332 2.5 L334 0.5 L336 2.5 L338 0.5 L340 2.5 L342 0.5 L344 2.5 L346 0.5 L348 2.5 L350 0.5 L352 2.5 L354 0.5 L356 2.5 L358 0.5 L360 2.5 L362 0.5 L364 2.5 L366 0.5 L368 2.5 L370 0.5 L372 2.5 L374 0.5 L376 2.5 L378 0.5 L380 2.5 L382 0.5 L384 2.5 L386 0.5 L388 2.5 L390 0.5 L392 2.5 L394 0.5 L396 2.5 L398 0.5 L400 2.5 L402 0.5 L404 2.5 L406 0.5 L408 2.5 L410 0.5 L412 2.5 L414 0.5 L416 2.5 L418 0.5 L420 2.5 L422 0.5 L424 2.5 L426 0.5 L428 2.5 L430 0.5 L432 2.5 L434 0.5 L436 2.5 L438 0.5 L440 2.5 L442 0.5 L444 2.5 L446 0.5 L448 2.5 L450 0.5 L452 2.5 L454 0.5 L456 2.5 L458 0.5 L460 2.5 L462 0.5 L464 2.5 L466 0.5 L468 2.5 L470 0.5 L472 2.5 L474 0.5 L476 2.5 L478 0.5 L480 2.5 L482 0.5 L484 2.5 L486 0.5 L488 2.5 L490 0.5 L492 2.5 L494 0.5 L496 2.5 L498 0.5 L500 2.5 L502 0.5 L504 2.5 L506 0.5 L508 2.5 L510 0.5 L512 2.5 L514 0.5 L516 2.5 L518 0.5 L520 2.5 L522 0.5 L524 2.5 L526 0.5 L528 2.5 L530 0.5 L532 2.5 L534 0.5 L536 2.5 L538 0.5 L540 2.5 L542 0.5 L544 2.5 L546 0.5 L548 2.5 L550 0.5 L552 2.5 L554 0.5 L556 2.5 L558 0.5 L560 2.5 L562 0.5 L564 2.5 L566 0.5 L568 2.5 L570 0.5 L572 2.5 L574 0.5 L576 2.5 L578 0.5 L580 2.5 L582 0.5 L584 2.5 L586 0.5 L588 2.5 L590 0.5 L592 2.5 L594 0.5 L596 2.5 L598 0.5 L600 2.5 L602 0.5 L604 2.5 L606 0.5 L608 2.5 L610 0.5 L612 2.5 L614 0.5 L616 2.5 L618 0.5 L620 2.5 L622 0.5 L624 2.5 L626 0.5 L628 2.5 L630 0.5 L632 2.5 L634 0.5 L636 2.5 L638 0.5 L640 2.5 L642 0.5 L644 2.5 L646 0.5 L648 2.5 L650 0.5 L652 2.5 L654 0.5 L656 2.5 L658 0.5 L660 2.5 L662 0.5 L664 2.5 L666 0.5 L668 2.5 L670 0.5 L672 2.5 L674 0.5 L676 2.5 L678 0.5 L680 2.5 L682 0.5 L684 2.5 L686 0.5 L688 2.5" fill="none" stroke="#6a7a5c" stroke-width="1" opacity="0.85"/></svg>
<svg style="position:absolute;left:415px;top:582.0px;" width="53" height="3" viewBox="0 0 53 3"><path d="M0 2.5 L2 0.5 L4 2.5 L6 0.5 L8 2.5 L10 0.5 L12 2.5 L14 0.5 L16 2.5 L18 0.5 L20 2.5 L22 0.5 L24 2.5 L26 0.5 L28 2.5 L30 0.5 L32 2.5 L34 0.5 L36 2.5 L38 0.5 L40 2.5 L42 0.5 L44 2.5 L46 0.5 L48 2.5 L50 0.5 L52 2.5 L54 0.5 L56 2.5" fill="none" stroke="#8a8a6a" stroke-width="1" opacity="0.85"/></svg>
<div style="position:absolute;left:415px;top:440.0px;width:2px;height:24px;background:#d0d0d0;"></div>
<svg style="position:absolute;left:421px;top:425px;" width="13" height="16" viewBox="0 0 13 16"><circle cx="6.5" cy="6" r="5" fill="#f5c54a"/><rect x="4" y="10.5" width="5" height="4" fill="#9a9a9a"/></svg>
<div style="position:absolute;left:1252.5px;top:362px;width:7px;height:259px;background:rgba(200,205,210,0.24);"></div>
<div style="position:absolute;left:1249.4px;top:90.7px;width:9.6px;height:9.3px;background:#d3a622;"></div>
<div style="position:absolute;left:1249.5px;top:154px;width:10.5px;height:1.8px;background:#d3a622;"></div>
<div style="position:absolute;left:1248px;top:459.5px;width:12px;height:1.5px;background:#6a6a6a;"></div>
<div style="position:absolute;left:1248px;top:551px;width:12px;height:10px;background:#8b7d62;"></div>
<div style="position:absolute;left:1248px;top:611.6px;width:12px;height:1.6px;background:#d3a622;"></div>
<div style="position:absolute;left:1122px;top:106.6px;width:103.5px;height:24px;background:#3a3b3c;border-radius:3px;"></div>
<svg style="position:absolute;left:1128.5px;top:112.5px;" width="14" height="14" viewBox="0 0 14 14"><circle cx="7" cy="7" r="6.5" fill="#db4437"/><path d="M7 7 L1 10 A6.5 6.5 0 0 0 7 13.5 Z" fill="#0f9d58"/><path d="M7 7 L13.5 7 A6.5 6.5 0 0 1 7 13.5 Z" fill="#f4b400"/><circle cx="7" cy="7" r="3" fill="#fff"/><circle cx="7" cy="7" r="2.2" fill="#4285f4"/></svg>
<svg style="position:absolute;left:1147.5px;top:112.5px;" width="14" height="14" viewBox="0 0 14 14"><circle cx="7" cy="7" r="6.5" fill="#e66000"/><circle cx="7.5" cy="6.5" r="3.5" fill="#2a2a6a"/><path d="M2 4 Q5 1 10 2 Q6 3 5 6 Q4 10 9 12 Q3 13 2 8 Z" fill="#ffcb00" opacity="0.8"/></svg>
<svg style="position:absolute;left:1167.5px;top:112.5px;" width="14" height="14" viewBox="0 0 14 14"><circle cx="7" cy="7" r="6.5" fill="#5aa0e8"/><circle cx="7" cy="7" r="5.2" fill="#2f7fd8"/><path d="M10 4 L6 8 L4 10 L8 6 z" stroke="#fff" stroke-width="1.2"/></svg>
<svg style="position:absolute;left:1187px;top:112.5px;" width="14" height="14" viewBox="0 0 14 14"><ellipse cx="7" cy="7" rx="6" ry="6.5" fill="#e3192b"/><ellipse cx="7" cy="7" rx="2.5" ry="4.6" fill="#3a3b3c"/></svg>
<svg style="position:absolute;left:1206.5px;top:112px;" width="16" height="15" viewBox="0 0 16 15"><text x="2" y="13" font-family="Liberation Sans" font-size="15" font-weight="bold" fill="#4fc3f0">e</text><path d="M1 11 Q6 1 15 2" fill="none" stroke="#f3c13a" stroke-width="1.3"/></svg>
<div style="position:absolute;left:1260.5px;top:67px;width:19.5px;height:658px;background:#3c3f41;"></div>
<div style="position:absolute;left:1260.5px;top:67px;width:1px;height:658px;background:#323436;"></div>
<svg style="position:absolute;left:1264px;top:76px;" width="12" height="13" viewBox="0 0 12 13"><ellipse cx="6" cy="2.5" rx="5" ry="2" fill="#4aa0d0"/><path d="M1 2.5 V10.5 A5 2 0 0 0 11 10.5 V2.5" fill="#3a8fbf"/><path d="M1 5.2 A5 2 0 0 0 11 5.2 M1 8 A5 2 0 0 0 11 8" fill="none" stroke="#8cc6e6" stroke-width="0.8"/></svg>
<div style="position:absolute;left:1268.5px;top:113px;width:0;height:0;"><div style="position:absolute;left:0;top:0;transform:translate(-50%,-50%) rotate(90deg);white-space:pre;font-family:'Liberation Sans',sans-serif;font-size:10px;line-height:12.0px;color:#bbbbbb;">Database</div></div>
<div style="position:absolute;left:338.5px;top:704px;width:922px;height:21px;background:#2f3133;"></div>
<div style="transform:scaleX(1.0299);position:absolute;left:416.2px;top:708.22px;height:13.56px;line-height:13.56px;font-family:'Liberation Sans',sans-serif;font-size:11.3px;color:#bbbbbb;font-weight:normal;white-space:pre;transform-origin:0 50%;">\App\Mail</div>
<svg style="position:absolute;left:473.5px;top:709.5px;" width="6" height="11" viewBox="0 0 6 11"><path d="M1 1 L4.5 5.5 L1 10" fill="none" stroke="#555759" stroke-width="1"/></svg>
<div style="transform:scaleX(0.8757);position:absolute;left:486.5px;top:708.22px;height:13.56px;line-height:13.56px;font-family:'Liberation Sans',sans-serif;font-size:11.3px;color:#bbbbbb;font-weight:normal;white-space:pre;transform-origin:0 50%;">FeedbackSent</div>
<div style="position:absolute;left:0px;top:725px;width:1280px;height:20px;background:#3c3f41;"></div>
<div style="position:absolute;left:0px;top:725px;width:1280px;height:1px;background:#333537;"></div>
<svg style="position:absolute;left:27px;top:729px;" width="14" height="14" viewBox="0 0 14 14"><circle cx="4" cy="4" r="3.3" fill="#ddd" stroke="#777" stroke-width="0.8"/><path d="M2.5 4 H5.5" stroke="#555" stroke-width="1"/><circle cx="8" cy="8" r="4" fill="#f0b040"/><rect x="4" y="10.5" width="8" height="3.5" fill="#3a8fd0"/><rect x="5.5" y="7" width="5" height="1.5" fill="#333"/></svg>
<div style="transform:scaleX(0.8536);position:absolute;left:43px;top:730.02px;height:13.56px;line-height:13.56px;font-family:'Liberation Sans',sans-serif;font-size:11.3px;color:#bbbbbb;font-weight:normal;white-space:pre;transform-origin:0 50%;"><span class="u">6</span>: TODO</div>
<svg style="position:absolute;left:100px;top:729px;" width="13" height="13" viewBox="0 0 13 13"><rect x="0.5" y="0.5" width="12" height="12" fill="#000" stroke="#777" stroke-width="1"/><path d="M2.5 3.5 L5 6 L2.5 8.5" fill="none" stroke="#fff" stroke-width="1"/><path d="M6 9.5 H9" stroke="#fff" stroke-width="1"/></svg>
<div style="transform:scaleX(0.9156);position:absolute;left:115.6px;top:730.02px;height:13.56px;line-height:13.56px;font-family:'Liberation Sans',sans-serif;font-size:11.3px;color:#bbbbbb;font-weight:normal;white-space:pre;transform-origin:0 50%;">Terminal</div>
<svg style="position:absolute;left:1188.5px;top:728.5px;" width="15" height="14" viewBox="0 0 15 14"><path d="M7 0.5 A6.2 6 0 1 0 10.5 11.5 L14 13.5 L12.5 9.5 A6.2 6 0 0 0 7 0.5 Z" fill="#59a869"/><text x="7" y="10" text-anchor="middle" font-family="Liberation Sans" font-size="9" font-weight="bold" fill="#1e3a22">1</text></svg>
<div style="transform:scaleX(0.8708);position:absolute;left:1207.3px;top:730.02px;height:13.56px;line-height:13.56px;font-family:'Liberation Sans',sans-serif;font-size:11.3px;color:#bbbbbb;font-weight:normal;white-space:pre;transform-origin:0 50%;">Event Log</div>
<div style="position:absolute;left:0px;top:745px;width:1280px;height:19.5px;background:#3c3f41;"></div>
<div style="position:absolute;left:0px;top:745px;width:1280px;height:1px;background:#47494b;"></div>
<svg style="position:absolute;left:8px;top:749px;" width="13" height="13" viewBox="0 0 13 13"><rect x="0.5" y="0.5" width="11.5" height="10.5" fill="#5a5c5e" stroke="#8c8e90" stroke-width="1"/><path d="M0 12.5 H12.5" stroke="#8c8e90" stroke-width="1"/></svg>
<div style="transform:scaleX(0.9088);position:absolute;left:27.8px;top:748.82px;height:13.56px;line-height:13.56px;font-family:'Liberation Sans',sans-serif;font-size:11.3px;color:#bbbbbb;font-weight:normal;white-space:pre;transform-origin:0 50%;">IDE and Plugin Updates: PhpStorm is ready to update. (yesterday 16:47)</div>
<div style="transform:scaleX(0.8853);position:absolute;left:1023px;top:748.97px;height:13.56px;line-height:13.56px;font-family:'Liberation Sans',sans-serif;font-size:11.3px;color:#bbbbbb;font-weight:normal;white-space:pre;transform-origin:0 50%;">142 chars, 5 line breaks</div>
<div style="transform:scaleX(0.8318);position:absolute;left:1141.9px;top:748.97px;height:13.56px;line-height:13.56px;font-family:'Liberation Sans',sans-serif;font-size:11.3px;color:#bbbbbb;font-weight:normal;white-space:pre;transform-origin:0 50%;">41:1</div>
<div style="transform:scaleX(0.8720);position:absolute;left:1170.3px;top:748.97px;height:13.56px;line-height:13.56px;font-family:'Liberation Sans',sans-serif;font-size:11.3px;color:#bbbbbb;font-weight:normal;white-space:pre;transform-origin:0 50%;">LF</div>
<svg style="position:absolute;left:1182.5px;top:751px;" width="5" height="9" viewBox="0 0 5 9"><path d="M0 3.5 L2.5 0.5 L5 3.5 Z M0 5.5 L2.5 8.5 L5 5.5 Z" fill="#b0b0b0"/></svg>
<div style="transform:scaleX(0.8590);position:absolute;left:1196.7px;top:748.97px;height:13.56px;line-height:13.56px;font-family:'Liberation Sans',sans-serif;font-size:11.3px;color:#bbbbbb;font-weight:normal;white-space:pre;transform-origin:0 50%;">UTF-8</div>
<svg style="position:absolute;left:1225px;top:751px;" width="5" height="9" viewBox="0 0 5 9"><path d="M0 3.5 L2.5 0.5 L5 3.5 Z M0 5.5 L2.5 8.5 L5 5.5 Z" fill="#b0b0b0"/></svg>
<svg style="position:absolute;left:1241.5px;top:748.5px;" width="10" height="12" viewBox="0 0 10 12"><path d="M2 5 V3 A2.5 2.5 0 0 1 7 3" fill="none" stroke="#aaa" stroke-width="1.2"/><rect x="1" y="5.5" width="8" height="6" fill="#aaa"/><rect x="4" y="7.5" width="2" height="2" fill="#3c3f41"/></svg>
<svg style="position:absolute;left:1261px;top:747px;" width="12" height="15" viewBox="0 0 12 15"><circle cx="6" cy="5" r="4.2" fill="none" stroke="#9a9c9e" stroke-width="1.2"/><path d="M2 5 H10" stroke="#9a9c9e" stroke-width="1"/><path d="M1.5 14 L3 9 H9 L10.5 14" fill="none" stroke="#9a9c9e" stroke-width="1.2"/></svg>
<div style="position:absolute;left:962.2px;top:652.2px;width:292.8px;height:64.5px;background:#4b4d4f;"></div>
<svg style="position:absolute;left:971px;top:659.5px;" width="13" height="13" viewBox="0 0 13 13"><circle cx="6.5" cy="6.5" r="6" fill="#3f8fd2"/><circle cx="6.5" cy="6.5" r="6" fill="url(#ig)" opacity="0.4"/><rect x="5.6" y="5.5" width="1.8" height="4.5" fill="#fff"/><rect x="5.6" y="3" width="1.8" height="1.7" fill="#fff"/></svg>
<div style="transform:scaleX(0.9058);position:absolute;left:990.5px;top:659.22px;height:13.56px;line-height:13.56px;font-family:'Liberation Sans',sans-serif;font-size:11.3px;color:#c8c8c8;font-weight:bold;white-space:pre;transform-origin:0 50%;">Install Dependencies</div>
<div style="transform:scaleX(0.8136);position:absolute;left:990.5px;top:677.22px;height:13.56px;line-height:13.56px;font-family:'Liberation Sans',sans-serif;font-size:11.3px;color:#bbbbbb;font-weight:normal;white-space:pre;transform-origin:0 50%;">From </div>
<div style="transform:scaleX(0.8511);position:absolute;left:1017px;top:677.22px;height:13.56px;line-height:13.56px;font-family:'Liberation Sans',sans-serif;font-size:11.3px;color:#589df6;font-weight:normal;white-space:pre;transform-origin:0 50%;"><span class="u">composer.json</span></div>
<div style="transform:scaleX(0.6875);position:absolute;left:990.5px;top:697.52px;height:13.56px;line-height:13.56px;font-family:'Liberation Sans',sans-serif;font-size:11.3px;color:#589df6;font-weight:normal;white-space:pre;transform-origin:0 50%;">Run 'composer install'</div>
<div style="transform:scaleX(0.9132);position:absolute;left:1083.6px;top:697.52px;height:13.56px;line-height:13.56px;font-family:'Liberation Sans',sans-serif;font-size:11.3px;color:#589df6;font-weight:normal;white-space:pre;transform-origin:0 50%;">Don't ask again</div>
<div style="transform:scaleX(0.9308);position:absolute;left:913px;top:672.20px;height:22.80px;line-height:22.80px;font-family:'Liberation Sans',sans-serif;font-size:19px;color:rgba(200,200,200,0.42);font-weight:normal;white-space:pre;transform-origin:0 50%;">Активация Windows</div>
<div style="transform:scaleX(0.9881);position:absolute;left:913px;top:694.70px;height:16.20px;line-height:16.20px;font-family:'Liberation Sans',sans-serif;font-size:13.5px;color:rgba(200,200,200,0.42);font-weight:normal;white-space:pre;transform-origin:0 50%;">Чтобы активировать Windows, перейдите в раздел</div>
<div style="transform:scaleX(0.9846);position:absolute;left:913px;top:712.60px;height:16.20px;line-height:16.20px;font-family:'Liberation Sans',sans-serif;font-size:13.5px;color:rgba(200,200,200,0.42);font-weight:normal;white-space:pre;transform-origin:0 50%;">"Параметры".</div>
<div style="position:absolute;left:0px;top:764px;width:1280px;height:36px;background:#283541;"></div>
<svg style="position:absolute;left:14px;top:775px;" width="15" height="15" viewBox="0 0 15 15"><path d="M0 2 L6.3 1.1 V7 H0 Z M7.3 1 L15 0 V7 H7.3 Z M0 8 H6.3 V13.9 L0 13 Z M7.3 8 H15 V15 L7.3 14 Z" fill="#ffffff"/></svg>
<div style="position:absolute;left:56px;top:771.7px;width:21.3px;height:21px;background:#fb7a24;border-radius:1px;"></div>
<svg style="position:absolute;left:56px;top:771.7px;" width="21.3" height="21" viewBox="0 0 21.3 21"><path d="M6 4.5 A2.6 2.6 0 0 1 10.6 6.2 A2.6 2.6 0 0 1 15.3 4.5 A2.6 2.6 0 0 1 16.6 9.2 L16.6 11.8 A2.6 2.6 0 0 1 15.3 16.5 A2.6 2.6 0 0 1 10.6 14.8 A2.6 2.6 0 0 1 6 16.5 A2.6 2.6 0 0 1 4.7 11.8 L4.7 9.2 A2.6 2.6 0 0 1 6 4.5 Z" fill="none" stroke="#fff" stroke-width="1.8"/></svg>
<div style="position:absolute;left:49px;top:797.8px;width:35.400000000000006px;height:2.2px;background:#7ab8e8;"></div>
<svg style="position:absolute;left:101px;top:772px;" width="19" height="20" viewBox="0 0 19 20"><path d="M17.5 11 H5 Q5.5 16 10.5 16 Q14 16 17 14 V18 Q14 19.5 10 19.5 Q1.5 19.5 1.5 11 Q1.5 2 10 1.5 Q18 1.5 17.5 11 Z M5 8.5 H13.5 Q13.5 5 9.5 5 Q5.5 5 5 8.5 Z" fill="#1a8fe3" fill-rule="evenodd"/><path d="M1 9 Q3 2 9 1.5" fill="none" stroke="#3fb0ff" stroke-width="1.5"/></svg>
<div style="position:absolute;left:92px;top:797.8px;width:36px;height:2.2px;background:#7ab8e8;"></div>
<div style="position:absolute;left:144px;top:771.7px;width:19.3px;height:18px;background:#001d34;border:1.3px solid #31a8ff;"></div>
<div style="position:absolute;left:147px;top:775.00px;height:12.00px;line-height:12.00px;font-family:'Liberation Sans',sans-serif;font-size:10px;color:#31a8ff;font-weight:bold;white-space:pre;">Ps</div>
<svg style="position:absolute;left:186.5px;top:771px;" width="21" height="22" viewBox="0 0 21 22"><path d="M10.5 1 C3 1 1 4 1 10 C1 14 2.5 16.5 5 17.5 V21 L8.5 18.5 C9 18.6 9.8 18.6 10.5 18.6 C18 18.6 20 15.5 20 10 C20 4 18 1 10.5 1 Z" fill="#7360f2"/><path d="M6.5 6 Q7 5 8 5.5 L9 7 Q9 8 8.3 8.5 Q9 11 12 12.5 Q12.5 11.8 13.5 12 L15 13 Q15.5 14 14.5 14.5 Q12 15.5 8.5 12.5 Q5.5 9 6.5 6 Z" fill="#fff"/></svg>
<svg style="position:absolute;left:230px;top:771px;" width="22" height="22" viewBox="0 0 22 22"><rect x="1" y="2" width="20" height="5.5" fill="#8a2f8a"/><rect x="1" y="7.5" width="20" height="5.5" fill="#2f58b8"/><rect x="1" y="13" width="20" height="6" fill="#3a9a3a"/><rect x="0" y="2" width="22" height="1.2" fill="#c04040"/><rect x="8" y="6" width="6" height="9" fill="#e8d090" stroke="#704010" stroke-width="0.8"/><rect x="9" y="0" width="4" height="5" fill="#e0a040"/></svg>
<div style="position:absolute;left:222.7px;top:797.8px;width:35.900000000000034px;height:2.2px;background:#7ab8e8;"></div>
<svg style="position:absolute;left:274.4px;top:772px;" width="20" height="20" viewBox="0 0 20 20"><circle cx="10" cy="10" r="10" fill="#2aa3df"/><path d="M4 10 L15 5.5 L13 15 L9.5 12.5 L8 14.5 L8 11.5 L13 7 L7 11 Z" fill="#fff"/></svg>
<div style="position:absolute;left:283px;top:785px;width:14.6px;height:9.7px;background:#e53935;border-radius:2px;"></div>
<div style="position:absolute;left:284.5px;top:785.50px;height:9.00px;line-height:9.00px;font-family:'Liberation Sans',sans-serif;font-size:7.5px;color:#fff;font-weight:normal;white-space:pre;">.71</div>
<div style="position:absolute;left:267px;top:797.8px;width:35.5px;height:2.2px;background:#7ab8e8;"></div>
<div style="position:absolute;left:306.7px;top:764px;width:42.6px;height:36px;background:#46505c;"></div>
<svg style="position:absolute;left:317.7px;top:772px;" width="21" height="21" viewBox="0 0 21 21"><defs><linearGradient id="psg2" x1="0" y1="0" x2="1" y2="1"><stop offset="0" stop-color="#af1df5"/><stop offset="1" stop-color="#fc801d"/></linearGradient></defs><path d="M1 3 L15 0.5 L20.5 10 L17 20.5 L2 20 Z" fill="#b345f1"/><rect x="4" y="4" width="13" height="13" fill="#000"/><text x="5" y="12" font-family="Liberation Sans" font-size="7.5" font-weight="bold" fill="#fff">PS</text><rect x="5.5" y="14.5" width="5" height="1.2" fill="#fff"/></svg>
<div style="position:absolute;left:307.8px;top:797.8px;width:40.599999999999966px;height:2.2px;background:#7ab8e8;"></div>
<div style="position:absolute;left:349.3px;top:764px;width:44px;height:36px;background:#313b47;"></div>
<svg style="position:absolute;left:361px;top:771px;" width="21" height="22" viewBox="0 0 21 22"><rect x="1" y="1" width="5" height="8" fill="#f5c518"/><path d="M8 4 H18 V10 M2 12 V19 H9" fill="none" stroke="#8a9a8a" stroke-width="1" stroke-dasharray="2,1"/><path d="M9 20 L18 11 M11 11 L20 20" stroke="#ddd" stroke-width="2"/><rect x="15" y="8" width="5" height="4" fill="#888" transform="rotate(45 17.5 10)"/></svg>
<svg style="position:absolute;left:403px;top:771px;" width="23" height="22" viewBox="0 0 23 22"><path d="M16.5 0.5 L22.5 3 V19 L16.5 21.5 L7 13 L3 16 L0.5 15 V7 L3 6 L7 9 Z M16.5 6 L11 11 L16.5 16 Z M3 8.5 V13.5 L5.5 11 Z" fill="#865fc5"/></svg>
<svg style="position:absolute;left:448.6px;top:773px;" width="20" height="17" viewBox="0 0 20 17"><path d="M0 2 H7 L9 4 H20 V17 H0 Z" fill="#f8d775"/><rect x="0" y="6" width="20" height="11" fill="#ffe8a0"/><rect x="5" y="10" width="10" height="5" fill="#2d8fd5"/></svg>
<div style="position:absolute;left:440.5px;top:797.8px;width:35.89999999999998px;height:2.2px;background:#7ab8e8;"></div>
<svg style="position:absolute;left:492px;top:772px;" width="20" height="20" viewBox="0 0 20 20"><circle cx="10" cy="10" r="10" fill="#db4437"/><path d="M10 10 L1.3 15 A10 10 0 0 0 10 20 L14.5 12.5 Z" fill="#0f9d58"/><path d="M10 10 L19.9 8.5 A10 10 0 0 1 10 20 L14.5 12.5 Z" fill="#ffcd40"/><circle cx="10" cy="10" r="4.6" fill="#fff"/><circle cx="10" cy="10" r="3.5" fill="#4285f4"/></svg>
<div style="position:absolute;left:484.4px;top:797.8px;width:35.30000000000007px;height:2.2px;background:#7ab8e8;"></div>
<svg style="position:absolute;left:536.5px;top:771px;" width="20" height="22" viewBox="0 0 20 22"><path d="M4 2 Q12 0 18 4 Q14 4 14 6 Q18 12 12 18 Q8 21 10 22 Q5 20 7 15 Q10 10 6 6 Q3 5 4 2 Z" fill="#9a8fd0"/><path d="M6 6 Q10 10 7 15" fill="none" stroke="#6a5fa0" stroke-width="1"/></svg>
<div style="position:absolute;left:528px;top:797.8px;width:35.299999999999955px;height:2.2px;background:#7ab8e8;"></div>
<div style="position:absolute;left:578.7px;top:771.5px;width:21.1px;height:21px;background:#bf0000;"></div>
<div style="position:absolute;left:581.5px;top:773.60px;height:16.80px;line-height:16.80px;font-family:'Liberation Sans',sans-serif;font-size:14px;color:#fff;font-weight:bold;white-space:pre;font-style:italic;">Fz</div>
<div style="position:absolute;left:571.8px;top:797.8px;width:35.40000000000009px;height:2.2px;background:#7ab8e8;"></div>
<svg style="position:absolute;left:624px;top:773px;" width="18" height="18" viewBox="0 0 18 18"><circle cx="9" cy="9" r="6" fill="none" stroke="#fff" stroke-width="2.6" stroke-dasharray="2.4,1.8"/><circle cx="9" cy="9" r="4.8" fill="none" stroke="#fff" stroke-width="1.8"/></svg>
<div style="position:absolute;left:615.2px;top:797.8px;width:35.299999999999955px;height:2.2px;background:#7ab8e8;"></div>
<svg style="position:absolute;left:667px;top:774px;" width="19" height="16" viewBox="0 0 19 16"><rect x="0.5" y="0.5" width="18" height="15" fill="#6ab4e8"/><rect x="2" y="2" width="6" height="6" fill="#f5f5f5"/><path d="M5 3 A2 2 0 1 0 7 5 H5 Z" fill="#e8a030"/><rect x="10" y="3" width="7" height="2" fill="#f5f5f5"/><rect x="10" y="7" width="7" height="2" fill="#f5f5f5"/><rect x="2" y="11" width="15" height="2" fill="#3a8ad0"/></svg>
<div style="position:absolute;left:659px;top:797.8px;width:35.799999999999955px;height:2.2px;background:#7ab8e8;"></div>
<svg style="position:absolute;left:710px;top:771px;" width="20" height="22" viewBox="0 0 20 22"><path d="M2 6 L10 2 L18 6 V15 L10 19 L2 15 Z" fill="#e8c890"/><path d="M2 6 L10 10 L18 6 M10 10 V19" stroke="#b08850" stroke-width="0.8" fill="none"/><path d="M0 4 L6 1 M20 4 L14 1" stroke="#d8b880" stroke-width="2"/><rect x="9" y="12" width="10" height="9" fill="#3aa040"/><path d="M11.5 19 L16.5 14 M13 14 H16.5 V17.5" stroke="#fff" stroke-width="1.3" fill="none"/></svg>
<div style="position:absolute;left:702.2px;top:797.8px;width:35.799999999999955px;height:2.2px;background:#7ab8e8;"></div>
<svg style="position:absolute;left:753px;top:772px;" width="21" height="20" viewBox="0 0 21 20"><path d="M3 17 L8 1 H19 L20 12 L14 19 Z" fill="#6fc3e8"/><path d="M8 1 L12 15 L3 17" fill="#3d8fc0"/><path d="M14 19 L20 12 L16 13 Z" fill="#ddd"/></svg>
<div style="position:absolute;left:746px;top:797.8px;width:35px;height:2.2px;background:#7ab8e8;"></div>
<svg style="position:absolute;left:797.6px;top:771px;" width="20" height="22" viewBox="0 0 20 22"><path d="M2 6 L10 2 L18 6 V15 L10 19 L2 15 Z" fill="#e8c890"/><path d="M2 6 L10 10 L18 6 M10 10 V19" stroke="#b08850" stroke-width="0.8" fill="none"/><path d="M0 4 L6 1 M20 4 L14 1" stroke="#d8b880" stroke-width="2"/><rect x="9" y="12" width="10" height="9" fill="#3aa040"/><path d="M11.5 19 L16.5 14 M13 14 H16.5 V17.5" stroke="#fff" stroke-width="1.3" fill="none"/></svg>
<div style="position:absolute;left:789px;top:797.8px;width:36px;height:2.2px;background:#7ab8e8;"></div>
<div style="position:absolute;left:839.8px;top:774px;width:20px;height:15px;background:#0c0c0c;border:1px solid #6a6a6a;"></div>
<svg style="position:absolute;left:842px;top:776px;" width="16" height="10" viewBox="0 0 16 10"><path d="M1 2 H4 M1 4 H3 M5 3 L7 5 M8 6 H13" stroke="#ccc" stroke-width="1"/></svg>
<div style="position:absolute;left:833px;top:797.8px;width:35.299999999999955px;height:2.2px;background:#7ab8e8;"></div>
<svg style="position:absolute;left:884px;top:772px;" width="20" height="21" viewBox="0 0 20 21"><rect x="0.5" y="2" width="16" height="18" fill="#f5f5f0" stroke="#aaa" stroke-width="0.8"/><rect x="1" y="12" width="15" height="8" fill="#8bcf4a"/><path d="M4 5 V12 M6 6 H9" stroke="#222" stroke-width="1.3"/><path d="M18 1 L10 14" stroke="#e8c020" stroke-width="2.2"/></svg>
<div style="position:absolute;left:876.7px;top:797.8px;width:34.799999999999955px;height:2.2px;background:#7ab8e8;"></div>
<svg style="position:absolute;left:1062px;top:778px;" width="12" height="8" viewBox="0 0 12 8"><path d="M0.8 7 L6 1.5 L11.2 7" fill="none" stroke="#fff" stroke-width="1.3"/></svg>
<svg style="position:absolute;left:1082.5px;top:774px;" width="14" height="16" viewBox="0 0 14 16"><path d="M13 0.5 Q4 3 1 15 Q6 6 13 0.5 Z" fill="#a78bd0"/><path d="M13 0.5 Q10 9 2 13" fill="none" stroke="#c8b0f0" stroke-width="1"/></svg>
<svg style="position:absolute;left:1103px;top:775px;" width="16" height="15" viewBox="0 0 16 15"><rect x="4.5" y="1.5" width="10.5" height="8" fill="none" stroke="#fff" stroke-width="1.1"/><rect x="0.5" y="3.5" width="4" height="4" fill="none" stroke="#fff" stroke-width="1"/><path d="M9.5 9.5 V12 M5 13 H14 M2.5 7.5 V13" stroke="#fff" stroke-width="1.1"/></svg>
<svg style="position:absolute;left:1123.5px;top:774px;" width="17" height="17" viewBox="0 0 17 17"><path d="M1 6 H4 L8 2 V15 L4 11 H1 Z" fill="none" stroke="#fff" stroke-width="1.1"/><circle cx="12.5" cy="12.5" r="4.3" fill="#e81123"/><path d="M10.7 10.7 L14.3 14.3 M14.3 10.7 L10.7 14.3" stroke="#fff" stroke-width="1.1"/></svg>
<div style="transform:scaleX(0.8226);position:absolute;left:1147.2px;top:774.60px;height:13.80px;line-height:13.80px;font-family:'Liberation Sans',sans-serif;font-size:11.5px;color:#ffffff;font-weight:normal;white-space:pre;transform-origin:0 50%;">ENG</div>
<div style="transform:scaleX(0.8197);position:absolute;left:1191.7px;top:767.10px;height:13.80px;line-height:13.80px;font-family:'Liberation Sans',sans-serif;font-size:11.5px;color:#ffffff;font-weight:normal;white-space:pre;transform-origin:0 50%;">11:56</div>
<div style="transform:scaleX(0.8148);position:absolute;left:1179.4px;top:782.80px;height:13.80px;line-height:13.80px;font-family:'Liberation Sans',sans-serif;font-size:11.5px;color:#ffffff;font-weight:normal;white-space:pre;transform-origin:0 50%;">28.09.2021</div>
<svg style="position:absolute;left:1243px;top:774px;" width="22" height="20" viewBox="0 0 22 20"><path d="M0.5 0.5 H14.5 V11 H6 L3 14 V11 H0.5 Z" fill="#fff"/><path d="M3 3 H12 M3 5.5 H12 M3 8 H9" stroke="#283541" stroke-width="1"/><circle cx="15" cy="13" r="6.3" fill="#283541" stroke="#888" stroke-width="1.2"/><text x="15" y="17" text-anchor="middle" font-family="Liberation Sans" font-size="10" font-weight="bold" fill="#fff">1</text></svg>
<div style="position:absolute;left:1275px;top:764px;width:1px;height:36px;background:#4a5560;"></div>
</body></html>
